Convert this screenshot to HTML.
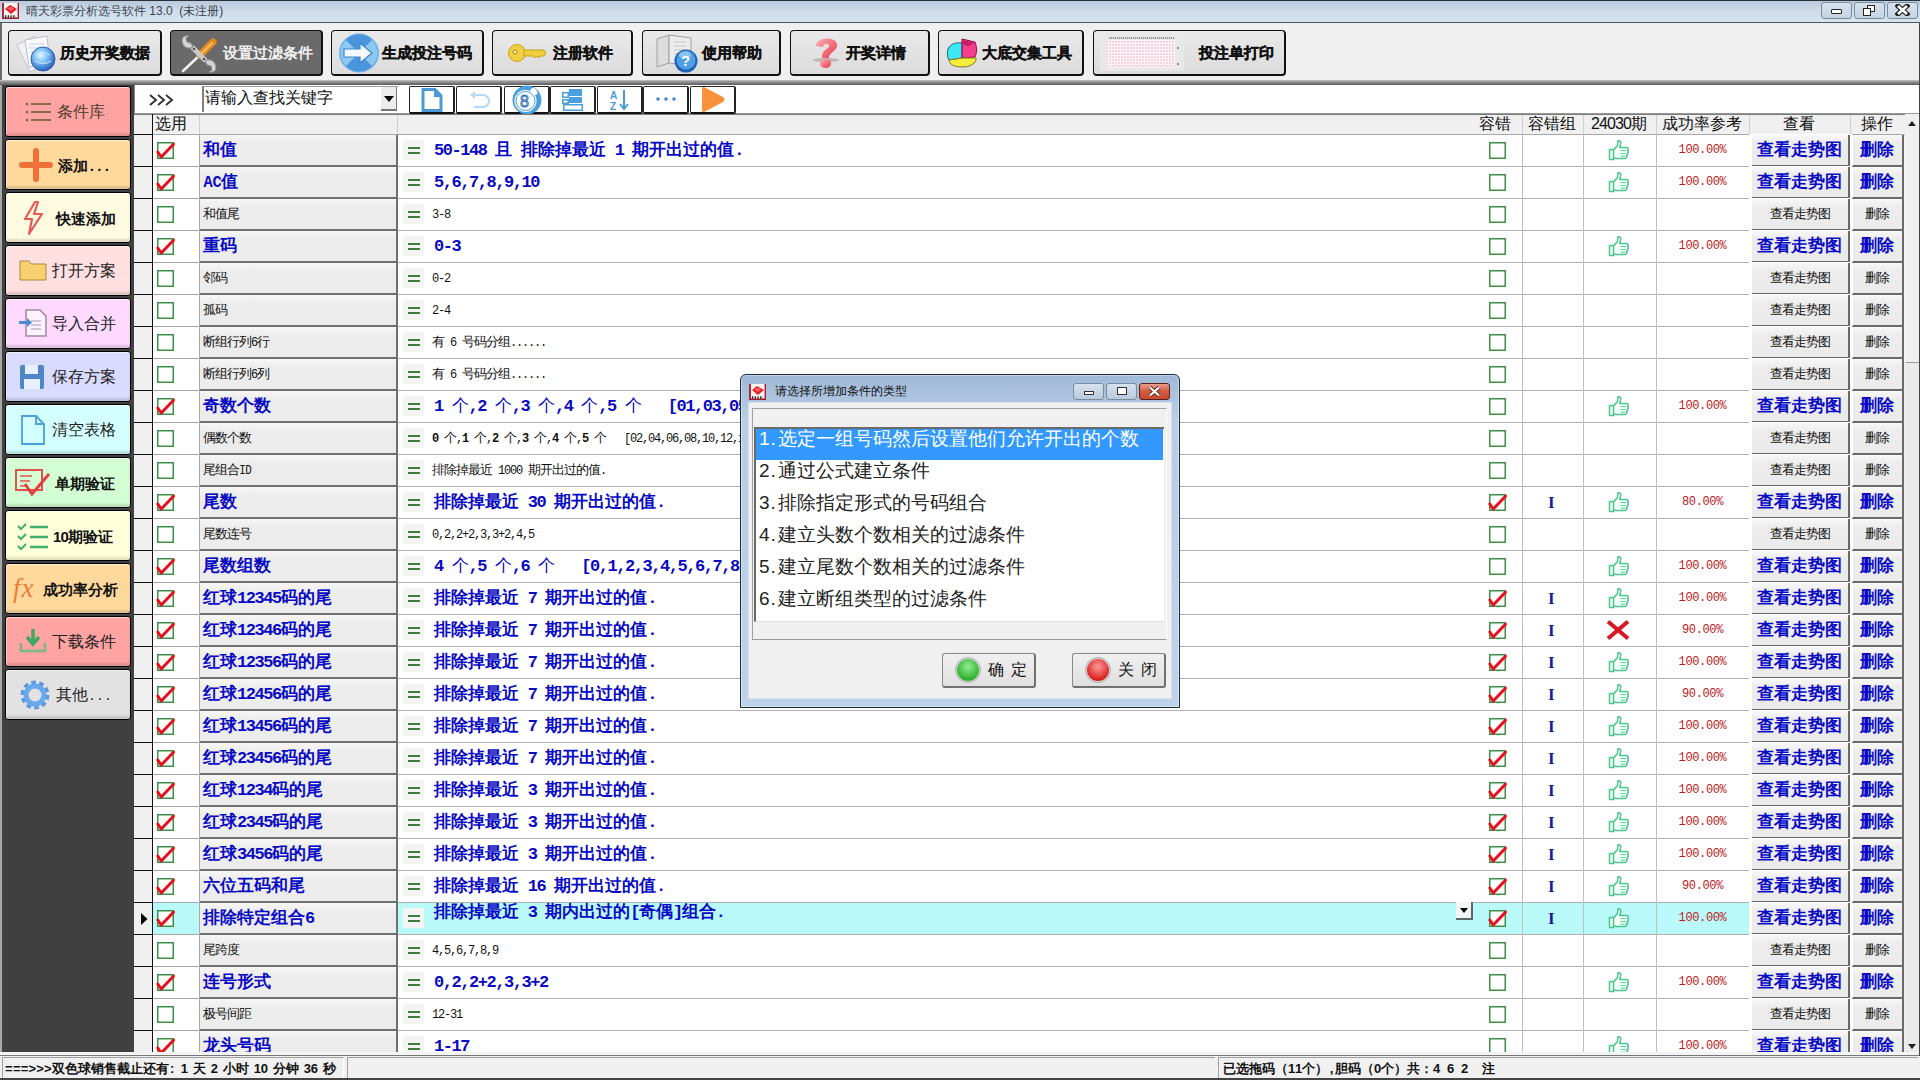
<!DOCTYPE html><html><head><meta charset="utf-8"><style>
*{box-sizing:border-box}
html,body{margin:0;padding:0}
body{width:1920px;height:1080px;overflow:hidden;position:relative;background:#f0f0f0;font-family:"Liberation Sans",sans-serif;color:#000}
.ab{position:absolute}
.t{position:absolute;white-space:nowrap;line-height:1}
.bb{font-weight:bold;color:#0a0ac4;font-size:17px}
.sm{font-size:13px;letter-spacing:-1px;color:#111;font-weight:500}
.sm i{font-size:12px;letter-spacing:0}
.t i{display:inline-block;font-style:normal;text-align:center}
.bb i{width:8.75px}
.sm i{width:6px}
.hd i{width:8px}
.dl i{width:9.5px}
.st i{width:7px}
.st i.s{width:5px}
.st i.w{width:7.8px}
.st i.s7{width:7px}
.rt i{width:6.85px;font-family:'Liberation Mono',monospace}
.bb b{font-weight:bold}
.t i.u{transform:scaleX(.9)}
.bb i,.sm i{font-family:'Liberation Mono',monospace}
.sb i{width:8px}
.sbb i{width:7.5px}

</style></head><body>
<div class="ab" style="left:0;top:0;width:1920px;height:23px;background:linear-gradient(#b9c9db,#cddbea 45%,#d6e3f0);border-top:1px solid #26313c;border-bottom:1px solid #4b5560"></div>
<svg class="ab" style="left:2px;top:2px" width="17" height="17" viewBox="0 0 17 17"><rect x="1" y="1" width="15" height="15" fill="#fff4f4"/><path d="M1 1 V16.5 H16.5 V1" fill="none" stroke="#a8182a" stroke-width="1.8"/><path d="M3 7 L8 3 L15 7 L9 12 Z" fill="#e41e24"/><path d="M5 6.5 L9 4.5 L12 6.5 L9 9 Z" fill="#ff6060"/><path d="M3 14.5 h11" stroke="#222" stroke-width="2.4" stroke-dasharray="1.3 1.4"/></svg>
<div class="t" style="left:26px;top:5px;font-size:12px;color:#3a4450">晴天彩票分析选号软件 13.0&nbsp; (未注册)</div>
<div class="ab" style="left:1821px;top:2px;width:31px;height:17px;border:1px solid #7d8c9d;border-radius:3px;background:linear-gradient(#d6e2ee,#c4d3e3)"></div>
<div class="ab" style="left:1854px;top:2px;width:31px;height:17px;border:1px solid #7d8c9d;border-radius:3px;background:linear-gradient(#d6e2ee,#c4d3e3)"></div>
<div class="ab" style="left:1887px;top:2px;width:31px;height:17px;border:1px solid #7d8c9d;border-radius:3px;background:linear-gradient(#d6e2ee,#c4d3e3)"></div>
<div class="ab" style="left:1831px;top:9px;width:11px;height:5px;background:#fff;border:1px solid #222;border-radius:1px"></div>
<div class="ab" style="left:1867px;top:5px;width:8px;height:7px;background:#fff;border:1px solid #222"></div><div class="ab" style="left:1863px;top:8px;width:8px;height:8px;background:#fff;border:1.5px solid #222"></div>
<svg class="ab" style="left:1895px;top:4px" width="15" height="12" viewBox="0 0 15 12"><path d="M3 2 L12 10 M12 2 L3 10" stroke="#222" stroke-width="5" stroke-linecap="square"/><path d="M3 2 L12 10 M12 2 L3 10" stroke="#fff" stroke-width="2.6"/></svg>
<div class="ab" style="left:0;top:23px;width:1920px;height:58px;background:#f0f0f0;border-left:2px solid #6e6e6e;border-right:1px solid #444"></div>
<div class="ab" style="left:8px;top:30px;width:154px;height:46px;background:linear-gradient(#e9e9e9,#dcdcdc);border:1px solid #111;border-right-width:2px;border-bottom-width:2px;border-radius:4px"></div>
<div class="t" style="left:60px;top:45px;font-size:15px;font-weight:bold;color:#111;-webkit-text-stroke:.35px #111">历史开奖数据</div>
<div class="ab" style="left:170px;top:30px;width:153px;height:46px;background:#6a6a6a;border:1px solid #111;border-right-width:2px;border-bottom-width:2px;border-radius:4px"></div>
<div class="t" style="left:223px;top:45px;font-size:15px;font-weight:bold;color:#f2f2f2;-webkit-text-stroke:0 #f2f2f2">设置过滤条件</div>
<div class="ab" style="left:331px;top:30px;width:153px;height:46px;background:linear-gradient(#e9e9e9,#dcdcdc);border:1px solid #111;border-right-width:2px;border-bottom-width:2px;border-radius:4px"></div>
<div class="t" style="left:382px;top:45px;font-size:15px;font-weight:bold;color:#111;-webkit-text-stroke:.35px #111">生成投注号码</div>
<div class="ab" style="left:492px;top:30px;width:141px;height:46px;background:linear-gradient(#e9e9e9,#dcdcdc);border:1px solid #111;border-right-width:2px;border-bottom-width:2px;border-radius:4px"></div>
<div class="t" style="left:553px;top:45px;font-size:15px;font-weight:bold;color:#111;-webkit-text-stroke:.35px #111">注册软件</div>
<div class="ab" style="left:642px;top:30px;width:139px;height:46px;background:linear-gradient(#e9e9e9,#dcdcdc);border:1px solid #111;border-right-width:2px;border-bottom-width:2px;border-radius:4px"></div>
<div class="t" style="left:702px;top:45px;font-size:15px;font-weight:bold;color:#111;-webkit-text-stroke:.35px #111">使用帮助</div>
<div class="ab" style="left:790px;top:30px;width:140px;height:46px;background:linear-gradient(#e9e9e9,#dcdcdc);border:1px solid #111;border-right-width:2px;border-bottom-width:2px;border-radius:4px"></div>
<div class="t" style="left:846px;top:45px;font-size:15px;font-weight:bold;color:#111;-webkit-text-stroke:.35px #111">开奖详情</div>
<div class="ab" style="left:938px;top:30px;width:146px;height:46px;background:linear-gradient(#e9e9e9,#dcdcdc);border:1px solid #111;border-right-width:2px;border-bottom-width:2px;border-radius:4px"></div>
<div class="t" style="left:982px;top:45px;font-size:15px;font-weight:bold;color:#111;-webkit-text-stroke:.35px #111">大底交集工具</div>
<div class="ab" style="left:1093px;top:30px;width:193px;height:46px;background:linear-gradient(#e9e9e9,#dcdcdc);border:1px solid #111;border-right-width:2px;border-bottom-width:2px;border-radius:4px"></div>
<div class="t" style="left:1199px;top:45px;font-size:15px;font-weight:bold;color:#111;-webkit-text-stroke:.35px #111">投注单打印</div>
<svg class="ab" style="left:15px;top:33px" width="44" height="40" viewBox="0 0 44 40"><defs><radialGradient id="gl" cx="40%" cy="35%" r="65%"><stop offset="0" stop-color="#e8f6ff"/><stop offset=".45" stop-color="#7cc0f4"/><stop offset="1" stop-color="#2a62c0"/></radialGradient></defs><path d="M2 12 L20 3 L33 31 L15 39 Z" fill="#f0f0f6" stroke="#c4c4d0"/><path d="M10 7 L32 3 L35 31 L14 34 Z" fill="#fafafe" stroke="#bcbcc8"/><path d="M14 11 h15 M14 15 h15 M15 19 h14" stroke="#c8cce4"/><circle cx="28" cy="26" r="12" fill="url(#gl)" stroke="#2f5fa8" stroke-width="1"/><path d="M21 22 q7 -5 14 0 M20 28 q8 5 16 0" stroke="#d8f0ff" stroke-width="1.2" fill="none" opacity=".8"/></svg>
<svg class="ab" style="left:179px;top:34px" width="42" height="40" viewBox="0 0 42 40"><path d="M4 37 L22 20" stroke="#f0f0f0" stroke-width="2.6" stroke-linecap="round"/><path d="M21 21 L34 8" stroke="#e88a18" stroke-width="7" stroke-linecap="round"/><path d="M23 19 L33 9" stroke="#f8c070" stroke-width="2" stroke-linecap="round"/><path d="M13 13 L27 27" stroke="#c8c8c8" stroke-width="5"/><path d="M3 6 C3 13 9 16 14 13 L12 9 L8 8 L7 4 L10 2 C6 1 3 3 3 6 Z" fill="#d4d4d4" stroke="#888"/><path d="M37 34 C37 27 31 24 26 27 L28 31 L32 32 L33 36 L30 38 C34 39 37 37 37 34 Z" fill="#d4d4d4" stroke="#888"/><circle cx="15" cy="15" r="1.3" fill="#555"/><circle cx="25" cy="25" r="1.3" fill="#555"/></svg>
<svg class="ab" style="left:339px;top:33px" width="40" height="40" viewBox="0 0 40 40"><circle cx="20" cy="20" r="19" fill="#4a94dc"/><path d="M20 20 L6 6 A19 19 0 0 0 6 34 Z M20 20 L34 6 A19 19 0 0 1 34 34 Z" fill="#8cc8f0"/><circle cx="20" cy="20" r="19" fill="none" stroke="#6aaee8" stroke-width="1.2"/><path d="M5 16 h16 v-6 l12 10 l-12 10 v-6 h-16 z" fill="#f4faff" stroke="#3a86cc" stroke-width="1.2"/></svg>
<svg class="ab" style="left:508px;top:42px" width="40" height="22" viewBox="0 0 40 22"><circle cx="9" cy="11" r="8.5" fill="#f0d040" stroke="#c8a020"/><circle cx="7" cy="10" r="2" fill="#fff8c0" stroke="#b08a10"/><path d="M16 8 h20 l2 3 l-2 3 h-4 l-1 2 l-2 -2 l-2 2 l-2 -2 h-9 z" fill="#f0d040" stroke="#c8a020"/></svg>
<svg class="ab" style="left:655px;top:33px" width="48" height="42" viewBox="0 0 48 42"><path d="M2 6 L14 2 L14 30 L2 34 Z" fill="#dcdcdc" stroke="#a0a0a0"/><path d="M14 2 L36 5 L36 33 L14 30 Z" fill="#ececec" stroke="#a0a0a0"/><path d="M19 9 h12 M19 13 h12 M19 17 h12 M19 21 h8" stroke="#c4c4c4"/><circle cx="31" cy="28" r="11.5" fill="#1f62b4"/><circle cx="31" cy="27" r="9.5" fill="#4f9ee6"/><ellipse cx="30" cy="22" rx="6" ry="3.5" fill="#a8d4f8" opacity=".7"/><text x="26" y="33" font-size="15" font-family="Liberation Sans" fill="#fff" font-weight="bold">?</text></svg>
<svg class="ab" style="left:813px;top:36px" width="32" height="32" viewBox="0 0 32 32"><defs><linearGradient id="qm" x1="0" y1="0" x2="1" y2="1"><stop offset="0" stop-color="#ffb0b8"/><stop offset="1" stop-color="#e8384c"/></linearGradient></defs><ellipse cx="13" cy="24" rx="13" ry="2" fill="#a8a8a8" opacity=".7"/><path d="M3 10 C2 1 25 -1 24 10 C23 16 16 16 16 22 h-7 C8 14 16 13 16 10 C16 7 11 7 10 11 Z" fill="url(#qm)"/><ellipse cx="12.5" cy="27.5" rx="5.5" ry="4.5" fill="url(#qm)"/></svg>
<svg class="ab" style="left:946px;top:37px" width="34" height="32" viewBox="0 0 34 32"><path d="M2 12 C4 7 10 5 16 6 L16 21 L3 23 C1 19 1 15 2 12 Z" fill="#3ce8f4" stroke="#1c6a7a"/><path d="M16 2 L29 5 C31 10 31 16 29 20 L16 21 Z" fill="#f2408e" stroke="#8a1048"/><path d="M16 3 L29 6 L22 9 L16 7 Z" fill="#c81a68"/><path d="M3 23 L16 21 L30 21 C31 26 24 30 16 30 C8 30 3 27 3 23 Z" fill="#f6ee3c" stroke="#807a20"/></svg>
<svg class="ab" style="left:1100px;top:35px" width="84" height="36" viewBox="0 0 84 36"><defs><pattern id="tk" width="3" height="3" patternUnits="userSpaceOnUse"><rect width="3" height="3" fill="#fdf4f7"/><rect width="2" height="2" fill="#f6d2de"/></pattern></defs><rect x="0" y="0" width="84" height="36" fill="#e8e8e8"/><rect x="7" y="5" width="68" height="28" fill="url(#tk)"/><path d="M9 3 h66" stroke="#7a7a7a" stroke-width="1.4" stroke-dasharray="1.2 0.8"/><circle cx="78" cy="13" r="0.9" fill="#555"/><circle cx="78" cy="29" r="0.9" fill="#555"/></svg>
<div class="ab" style="left:0;top:80px;width:1920px;height:5px;background:linear-gradient(#d0d0d0 0,#a0a0a0 20%,#8a8a8a 50%,#6a6a6a 80%,#5a5a5a)"></div>
<div class="ab" style="left:0;top:85px;width:134px;height:967px;background:#404040;border-left:2px solid #a8a8a8"></div>
<div class="ab" style="left:5px;top:86px;width:126px;height:51px;background:#ffa3a3;border:1px solid #000;border-radius:3px;box-shadow:inset 1px 1px 0 rgba(255,255,255,.55),inset 0 -3px 2px rgba(0,0,0,.12)"></div>
<div class="t sb" style="left:57px;top:104px;font-size:16px;color:#4d3d2d">条件库</div>
<div class="ab" style="left:5px;top:139px;width:126px;height:51px;background:#ffd99c;border:1px solid #000;border-radius:3px;box-shadow:inset 1px 1px 0 rgba(255,255,255,.55),inset 0 -3px 2px rgba(0,0,0,.12)"></div>
<div class="t sbb" style="left:58px;top:158px;font-size:15px;font-weight:bold;color:#111">添加<i>.</i><i>.</i><i>.</i></div>
<div class="ab" style="left:5px;top:192px;width:126px;height:51px;background:#fffbe0;border:1px solid #000;border-radius:3px;box-shadow:inset 1px 1px 0 rgba(255,255,255,.55),inset 0 -3px 2px rgba(0,0,0,.12)"></div>
<div class="t sbb" style="left:56px;top:211px;font-size:15px;font-weight:bold;color:#111">快速添加</div>
<div class="ab" style="left:5px;top:245px;width:126px;height:51px;background:#ffdfe0;border:1px solid #000;border-radius:3px;box-shadow:inset 1px 1px 0 rgba(255,255,255,.55),inset 0 -3px 2px rgba(0,0,0,.12)"></div>
<div class="t sb" style="left:52px;top:263px;font-size:16px;color:#222">打开方案</div>
<div class="ab" style="left:5px;top:298px;width:126px;height:51px;background:#ffd9ff;border:1px solid #000;border-radius:3px;box-shadow:inset 1px 1px 0 rgba(255,255,255,.55),inset 0 -3px 2px rgba(0,0,0,.12)"></div>
<div class="t sb" style="left:52px;top:316px;font-size:16px;color:#222">导入合并</div>
<div class="ab" style="left:5px;top:351px;width:126px;height:51px;background:#d9dbff;border:1px solid #000;border-radius:3px;box-shadow:inset 1px 1px 0 rgba(255,255,255,.55),inset 0 -3px 2px rgba(0,0,0,.12)"></div>
<div class="t sb" style="left:52px;top:369px;font-size:16px;color:#222">保存方案</div>
<div class="ab" style="left:5px;top:404px;width:126px;height:51px;background:#d4ffff;border:1px solid #000;border-radius:3px;box-shadow:inset 1px 1px 0 rgba(255,255,255,.55),inset 0 -3px 2px rgba(0,0,0,.12)"></div>
<div class="t sb" style="left:52px;top:422px;font-size:16px;color:#222">清空表格</div>
<div class="ab" style="left:5px;top:457px;width:126px;height:51px;background:#d4ffd4;border:1px solid #000;border-radius:3px;box-shadow:inset 1px 1px 0 rgba(255,255,255,.55),inset 0 -3px 2px rgba(0,0,0,.12)"></div>
<div class="t sbb" style="left:55px;top:476px;font-size:15px;font-weight:bold;color:#111">单期验证</div>
<div class="ab" style="left:5px;top:510px;width:126px;height:51px;background:#ffffd9;border:1px solid #000;border-radius:3px;box-shadow:inset 1px 1px 0 rgba(255,255,255,.55),inset 0 -3px 2px rgba(0,0,0,.12)"></div>
<div class="t sbb" style="left:53px;top:529px;font-size:15px;font-weight:bold;color:#111"><i>1</i><i>0</i>期验证</div>
<div class="ab" style="left:5px;top:563px;width:126px;height:51px;background:#ffd99c;border:1px solid #000;border-radius:3px;box-shadow:inset 1px 1px 0 rgba(255,255,255,.55),inset 0 -3px 2px rgba(0,0,0,.12)"></div>
<div class="t sbb" style="left:43px;top:582px;font-size:15px;font-weight:bold;color:#111">成功率分析</div>
<div class="ab" style="left:5px;top:616px;width:126px;height:51px;background:#ffa3a3;border:1px solid #000;border-radius:3px;box-shadow:inset 1px 1px 0 rgba(255,255,255,.55),inset 0 -3px 2px rgba(0,0,0,.12)"></div>
<div class="t sb" style="left:52px;top:634px;font-size:16px;color:#222">下载条件</div>
<div class="ab" style="left:5px;top:669px;width:126px;height:51px;background:#e2e2e2;border:1px solid #000;border-radius:3px;box-shadow:inset 1px 1px 0 rgba(255,255,255,.55),inset 0 -3px 2px rgba(0,0,0,.12)"></div>
<div class="t sb" style="left:56px;top:687px;font-size:16px;color:#222">其他<i>.</i><i>.</i><i>.</i></div>
<svg class="ab" style="left:25px;top:101px" width="28" height="22" viewBox="0 0 28 22"><g fill="#8a6a5a"><circle cx="2" cy="3" r="1.5"/><circle cx="2" cy="11" r="1.5"/><circle cx="2" cy="19" r="1.5"/></g><path d="M6 3 h20 M6 11 h20 M6 19 h20" stroke="#8a6a4a" stroke-width="2.2"/></svg>
<svg class="ab" style="left:19px;top:148px" width="34" height="34" viewBox="0 0 34 34"><path d="M17 3 V31 M3 17 H31" stroke="#f0703a" stroke-width="6" stroke-linecap="round"/></svg>
<svg class="ab" style="left:21px;top:200px" width="24" height="36" viewBox="0 0 24 36"><path d="M14 2 L4 19 H11 L8 34 L21 14 H13 L17 2 Z" fill="none" stroke="#e85a5a" stroke-width="2.2" stroke-linejoin="round"/></svg>
<svg class="ab" style="left:19px;top:259px" width="28" height="22" viewBox="0 0 28 22"><path d="M1 2 h9 l2 3 h15 v16 h-26 z" fill="#f8d070" stroke="#a88a40"/></svg>
<svg class="ab" style="left:17px;top:307px" width="32" height="32" viewBox="0 0 32 32"><path d="M9 3 h14 l6 6 v20 h-20 z" fill="#fff0ff" stroke="#9a8aa0" stroke-width="1.5"/><path d="M14 14 h10 M14 18 h10 M14 22 h10" stroke="#a09aaa"/><path d="M2 14 h8 v-3 l5 4.5 l-5 4.5 v-3 h-8 z" fill="#4a8ad0"/></svg>
<svg class="ab" style="left:19px;top:364px" width="26" height="26" viewBox="0 0 26 26"><rect x="1" y="1" width="24" height="24" rx="2" fill="#4f86c8"/><rect x="6" y="1" width="13" height="9" fill="#e8f0ff"/><rect x="5" y="15" width="16" height="10" fill="#e8f0ff"/></svg>
<svg class="ab" style="left:20px;top:414px" width="26" height="32" viewBox="0 0 26 32"><path d="M2 2 h14 l8 8 v20 h-22 z M16 2 v8 h8" fill="none" stroke="#4aa0d8" stroke-width="1.8"/></svg>
<svg class="ab" style="left:15px;top:468px" width="36" height="30" viewBox="0 0 36 30"><rect x="1" y="2" width="26" height="20" fill="none" stroke="#e05050" stroke-width="2"/><path d="M5 8 h12 M5 13 h10 M5 18 h8" stroke="#e05050" stroke-width="1.5"/><path d="M10 16 L17 26 L34 6" fill="none" stroke="#e04040" stroke-width="3"/></svg>
<svg class="ab" style="left:17px;top:522px" width="32" height="30" viewBox="0 0 32 30"><path d="M1 4 l3 3 l5 -5 M1 14 l3 3 l5 -5 M1 24 l3 3 l5 -5" fill="none" stroke="#40b070" stroke-width="2"/><path d="M13 5 h18 M13 15 h18 M13 25 h18" stroke="#40b070" stroke-width="2.4"/></svg>
<svg class="ab" style="left:12px;top:574px" width="32" height="30" viewBox="0 0 32 30"><text x="1" y="23" font-family="Liberation Serif" font-style="italic" font-size="27" fill="#f07a3a" letter-spacing="1">fx</text></svg>
<svg class="ab" style="left:19px;top:627px" width="28" height="28" viewBox="0 0 28 28"><path d="M14 2 v14 M8 10 l6 7 l6 -7" fill="none" stroke="#40a860" stroke-width="3.5"/><path d="M2 16 v8 h24 v-8" fill="none" stroke="#7ab888" stroke-width="2.5"/></svg>
<svg class="ab" style="left:19px;top:679px" width="32" height="32" viewBox="0 0 32 32"><circle cx="16" cy="16" r="11" fill="none" stroke="#5a98e0" stroke-width="7" stroke-dasharray="4 2.9"/><circle cx="16" cy="16" r="9" fill="none" stroke="#6aa8ee" stroke-width="5"/><circle cx="16" cy="16" r="4" fill="#e2e2e2"/></svg>
<div class="ab" style="left:134px;top:85px;width:1786px;height:29px;background:#fff;border-bottom:1px solid #9a9a9a"></div>
<div class="ab" style="left:134px;top:85px;width:1px;height:971px;background:#8a8a8a"></div>
<svg class="ab" style="left:148px;top:93px" width="28" height="14" viewBox="0 0 28 14"><path d="M2 2 L8 7 L2 12 M10 2 L16 7 L10 12 M18 2 L24 7 L18 12" fill="none" stroke="#333" stroke-width="1.9"/></svg>
<div class="ab" style="left:202px;top:86px;width:196px;height:26px;background:#fff;border-left:2px solid #808080;border-top:1px solid #a0a0a0"></div>
<div class="t" style="left:205px;top:90px;font-size:16px;color:#111">请输入查找关键字</div>
<div class="ab" style="left:381px;top:87px;width:16px;height:24px;background:#ececec;border-right:1px solid #777;border-bottom:2px solid #777"></div>
<svg class="ab" style="left:384px;top:96px" width="10" height="6" viewBox="0 0 10 6"><path d="M0 0 h10 l-5 6 z" fill="#000"/></svg>
<div class="ab" style="left:409px;top:86px;width:46px;height:28px;background:#fff;border:1px solid #222;border-bottom:2px solid #111;border-right:2px solid #222;border-radius:2px"></div>
<div class="ab" style="left:456px;top:86px;width:46px;height:28px;background:#fff;border:1px solid #222;border-bottom:2px solid #111;border-right:2px solid #222;border-radius:2px"></div>
<div class="ab" style="left:504px;top:86px;width:46px;height:28px;background:#fff;border:1px solid #222;border-bottom:2px solid #111;border-right:2px solid #222;border-radius:2px"></div>
<div class="ab" style="left:550px;top:86px;width:46px;height:28px;background:#fff;border:1px solid #222;border-bottom:2px solid #111;border-right:2px solid #222;border-radius:2px"></div>
<div class="ab" style="left:597px;top:86px;width:46px;height:28px;background:#fff;border:1px solid #222;border-bottom:2px solid #111;border-right:2px solid #222;border-radius:2px"></div>
<div class="ab" style="left:643px;top:86px;width:46px;height:28px;background:#fff;border:1px solid #222;border-bottom:2px solid #111;border-right:2px solid #222;border-radius:2px"></div>
<div class="ab" style="left:690px;top:86px;width:46px;height:28px;background:#fff;border:1px solid #222;border-bottom:2px solid #111;border-right:2px solid #222;border-radius:2px"></div>
<svg class="ab" style="left:421px;top:88px" width="22" height="24" viewBox="0 0 22 24"><path d="M2 1.5 h12 l6 6 v15 h-18 z" fill="#fff" stroke="#4a9ad8" stroke-width="3"/><path d="M13 1 v8 h8" fill="#4a9ad8"/></svg>
<svg class="ab" style="left:468px;top:89px" width="24" height="22" viewBox="0 0 24 22"><path d="M6 6 h9 a6 6 0 0 1 0 12 h-9" fill="none" stroke="#b8d8f0" stroke-width="2.2"/><path d="M2 6 l5 -4 v8 z" fill="#b8d8f0"/></svg>
<svg class="ab" style="left:511px;top:84px" width="32" height="32" viewBox="0 0 32 32"><circle cx="16" cy="16" r="14.5" fill="#4aa0dc"/><circle cx="14.5" cy="17" r="11" fill="#fff"/><circle cx="14.5" cy="17" r="9.5" fill="none" stroke="#4aa0dc" stroke-width="1"/><ellipse cx="23" cy="7.5" rx="2.8" ry="4" fill="#fff" transform="rotate(-40 23 7.5)"/><text x="9" y="23" font-size="16" font-family="Liberation Sans" fill="#fff" stroke="#3a7ab8" stroke-width="1">8</text></svg>
<svg class="ab" style="left:561px;top:88px" width="26" height="24" viewBox="0 0 26 24"><rect x="1.75" y="4.75" width="5.5" height="4.5" fill="none" stroke="#4aa0dc" stroke-width="1.5"/><rect x="8" y="1" width="13" height="7" fill="#4aa0dc"/><rect x="1.75" y="11.75" width="5.5" height="3.5" fill="none" stroke="#4aa0dc" stroke-width="1.5"/><rect x="8" y="9" width="13" height="6" fill="#4aa0dc"/><rect x="2.75" y="16.75" width="18.5" height="5.5" fill="none" stroke="#4aa0dc" stroke-width="1.5"/></svg>
<svg class="ab" style="left:609px;top:88px" width="22" height="24" viewBox="0 0 22 24"><text x="1" y="11" font-size="10" font-family="Liberation Sans" fill="#4a9ad8" font-weight="bold">A</text><text x="1" y="22" font-size="10" font-family="Liberation Sans" fill="#4a9ad8" font-weight="bold">Z</text><path d="M15 2 v19 M11 16 l4 5 l4 -5" fill="none" stroke="#4a9ad8" stroke-width="2"/></svg>
<svg class="ab" style="left:655px;top:96px" width="22" height="6" viewBox="0 0 22 6"><circle cx="3" cy="3" r="1.8" fill="#4a86c0"/><circle cx="11" cy="3" r="1.8" fill="#4a86c0"/><circle cx="19" cy="3" r="1.8" fill="#4a86c0"/></svg>
<svg class="ab" style="left:699px;top:86px" width="28" height="27" viewBox="0 0 28 27"><path d="M3 3 Q3 0 6 1.5 L24 11 Q27 13.5 24 16 L6 25.5 Q3 27 3 24 Z" fill="#f8913a"/></svg>
<div class="ab" style="left:134px;top:114px;width:1771px;height:21px;background:#f0f0f0;border-top:1px solid #7a7a7a;border-bottom:1px solid #a8a8a8"></div>
<div class="ab" style="left:152px;top:114px;width:1px;height:21px;background:#111"></div>
<div class="ab" style="left:134px;top:134px;width:18px;height:1px;background:#111"></div>
<div class="ab" style="left:199px;top:115px;width:1px;height:19px;background:#cfcfcf"></div>
<div class="ab" style="left:397px;top:115px;width:1px;height:19px;background:#cfcfcf"></div>
<div class="ab" style="left:1522px;top:115px;width:1px;height:19px;background:#cfcfcf"></div>
<div class="ab" style="left:1583px;top:115px;width:1px;height:19px;background:#cfcfcf"></div>
<div class="ab" style="left:1656px;top:115px;width:1px;height:19px;background:#cfcfcf"></div>
<div class="ab" style="left:1749px;top:115px;width:1px;height:19px;background:#cfcfcf"></div>
<div class="ab" style="left:1850px;top:115px;width:1px;height:19px;background:#cfcfcf"></div>
<div class="t hd" style="left:155px;top:116px;font-size:16px;color:#111">选用</div>
<div class="t hd" style="left:1479px;top:116px;font-size:16px;color:#111">容错</div>
<div class="t hd" style="left:1528px;top:116px;font-size:16px;color:#111">容错组</div>
<div class="t hd" style="left:1591px;top:116px;font-size:16px;color:#111"><i>2</i><i>4</i><i>0</i><i>3</i><i>0</i>期</div>
<div class="t hd" style="left:1662px;top:116px;font-size:16px;color:#111">成功率参考</div>
<div class="t hd" style="left:1783px;top:116px;font-size:16px;color:#111">查看</div>
<div class="t hd" style="left:1861px;top:116px;font-size:16px;color:#111">操作</div>
<div class="ab" style="left:134px;top:134px;width:1771px;height:918px;overflow:hidden">
<div class="ab" style="left:0;top:1px;width:18px;height:32px;background:#f0f0f0;border-bottom:1px solid #111"></div>
<div class="ab" style="left:18px;top:0px;width:1px;height:32px;background:#111"></div>
<div class="ab" style="left:19px;top:1px;width:46px;height:32px;background:#fff;border-bottom:1px solid #a8a8a8"></div>
<div class="ab" style="left:65px;top:0px;width:1px;height:32px;background:#a8a8a8"></div>
<div class="ab" style="left:23px;top:8px"><svg width="19" height="19" viewBox="0 0 19 19" style="overflow:visible"><rect x="0.75" y="0.75" width="15.5" height="15.5" fill="#fff" stroke="#3d8f45" stroke-width="1.5"/><path d="M0.8 10 L4.2 15 L16.5 2.2" fill="none" stroke="#e6101a" stroke-width="3" stroke-linecap="round" stroke-linejoin="round"/></svg></div>
<div class="ab" style="left:66px;top:1px;width:198px;height:32px;background:linear-gradient(#f6f6f6,#ececec 30%,#ececec);border-bottom:2px solid #6e6e6e;border-right:2px solid #707070"></div>
<div class="t bb" style="left:69px;top:7px">和值</div>
<div class="ab" style="left:264px;top:1px;width:1351px;height:32px;background:#fff;border-bottom:1px solid #b0b0b0"></div>

<div class="ab" style="left:1388px;top:0px;width:1px;height:32px;background:#c0c0c0"></div>
<div class="ab" style="left:1449px;top:0px;width:1px;height:32px;background:#c0c0c0"></div>
<div class="ab" style="left:1522px;top:0px;width:1px;height:32px;background:#c0c0c0"></div>
<div class="ab" style="left:269px;top:6px;width:21px;height:20px;background:#f3f5f3"></div>
<div class="ab" style="left:274px;top:13px;width:12px;height:2px;background:#3d7d3d"></div><div class="ab" style="left:274px;top:18px;width:12px;height:2px;background:#3d7d3d"></div>
<div class="t bb" style="left:300px;top:7px"><i>5</i><i>0</i><i>-</i><i>1</i><i>4</i><i>8</i><i>&nbsp;</i>且<i>&nbsp;</i>排除掉最近<i>&nbsp;</i><i>1</i><i>&nbsp;</i>期开出过的值<i>.</i></div>
<div class="ab" style="left:1355px;top:8px"><svg width="17" height="17" viewBox="0 0 17 17"><rect x="0.75" y="0.75" width="15.5" height="15.5" fill="#fff" stroke="#3d8f45" stroke-width="1.5"/></svg></div>
<div class="ab" style="left:1474px;top:5px"><svg width="22" height="22" viewBox="0 0 22 22"><path d="M1.5 10.5 h4 v10 h-4 z M5.5 11 L9.5 6.5 L10 1.8 C11.8 1.2 13.2 2.6 12.6 5.2 L11.8 8.6 H18.4 C20 8.6 20.6 10.2 19.8 11.2 C20.8 12 20.6 13.6 19.4 14 C20.2 14.8 19.8 16.4 18.6 16.6 C19.2 17.6 18.6 19.2 17.2 19.6 H8 L5.5 18.5" fill="#f4fff8" stroke="#48c48e" stroke-width="1.5" stroke-linejoin="round"/><path d="M12.5 11.6 h5.6 M12.5 14.6 h5.6 M12.5 17.2 h4.8" stroke="#58c898" stroke-width="1"/></svg></div>
<div class="t rt" style="left:1522px;top:9px;width:93px;text-align:center;font-size:12px;color:#c01820"><i>1</i><i>0</i><i>0</i><i>.</i><i>0</i><i>0</i><i>%</i></div>
<div class="ab" style="left:1615px;top:0px;width:101px;height:32px;background:#fff"></div>
<div class="ab" style="left:1617px;top:1px;width:99px;height:32px;background:linear-gradient(#f8f8f8,#ededed 25%,#eaeaea);border-right:2px solid #6a6a6a;border-bottom:2px solid #6a6a6a;border-left:1px solid #fff"></div>
<div class="ab" style="left:1716px;top:0px;width:2px;height:32px;background:#fff"></div>
<div class="ab" style="left:1718px;top:1px;width:52px;height:32px;background:linear-gradient(#f8f8f8,#ededed 25%,#eaeaea);border-right:2px solid #6a6a6a;border-bottom:2px solid #6a6a6a;border-left:1px solid #fff"></div>
<div class="t bb" style="left:1617px;top:7px;width:97px;text-align:center">查看走势图</div>
<div class="t bb" style="left:1718px;top:7px;width:50px;text-align:center">删除</div>
<div class="ab" style="left:0;top:33px;width:18px;height:32px;background:#f0f0f0;border-bottom:1px solid #111"></div>
<div class="ab" style="left:18px;top:32px;width:1px;height:32px;background:#111"></div>
<div class="ab" style="left:19px;top:33px;width:46px;height:32px;background:#fff;border-bottom:1px solid #a8a8a8"></div>
<div class="ab" style="left:65px;top:32px;width:1px;height:32px;background:#a8a8a8"></div>
<div class="ab" style="left:23px;top:40px"><svg width="19" height="19" viewBox="0 0 19 19" style="overflow:visible"><rect x="0.75" y="0.75" width="15.5" height="15.5" fill="#fff" stroke="#3d8f45" stroke-width="1.5"/><path d="M0.8 10 L4.2 15 L16.5 2.2" fill="none" stroke="#e6101a" stroke-width="3" stroke-linecap="round" stroke-linejoin="round"/></svg></div>
<div class="ab" style="left:66px;top:33px;width:198px;height:32px;background:linear-gradient(#f6f6f6,#ececec 30%,#ececec);border-bottom:2px solid #6e6e6e;border-right:2px solid #707070"></div>
<div class="t bb" style="left:69px;top:39px"><i class=u>A</i><i class=u>C</i>值</div>
<div class="ab" style="left:264px;top:33px;width:1351px;height:32px;background:#fff;border-bottom:1px solid #b0b0b0"></div>

<div class="ab" style="left:1388px;top:32px;width:1px;height:32px;background:#c0c0c0"></div>
<div class="ab" style="left:1449px;top:32px;width:1px;height:32px;background:#c0c0c0"></div>
<div class="ab" style="left:1522px;top:32px;width:1px;height:32px;background:#c0c0c0"></div>
<div class="ab" style="left:269px;top:38px;width:21px;height:20px;background:#f3f5f3"></div>
<div class="ab" style="left:274px;top:45px;width:12px;height:2px;background:#3d7d3d"></div><div class="ab" style="left:274px;top:50px;width:12px;height:2px;background:#3d7d3d"></div>
<div class="t bb" style="left:300px;top:39px"><i>5</i><i>,</i><i>6</i><i>,</i><i>7</i><i>,</i><i>8</i><i>,</i><i>9</i><i>,</i><i>1</i><i>0</i></div>
<div class="ab" style="left:1355px;top:40px"><svg width="17" height="17" viewBox="0 0 17 17"><rect x="0.75" y="0.75" width="15.5" height="15.5" fill="#fff" stroke="#3d8f45" stroke-width="1.5"/></svg></div>
<div class="ab" style="left:1474px;top:37px"><svg width="22" height="22" viewBox="0 0 22 22"><path d="M1.5 10.5 h4 v10 h-4 z M5.5 11 L9.5 6.5 L10 1.8 C11.8 1.2 13.2 2.6 12.6 5.2 L11.8 8.6 H18.4 C20 8.6 20.6 10.2 19.8 11.2 C20.8 12 20.6 13.6 19.4 14 C20.2 14.8 19.8 16.4 18.6 16.6 C19.2 17.6 18.6 19.2 17.2 19.6 H8 L5.5 18.5" fill="#f4fff8" stroke="#48c48e" stroke-width="1.5" stroke-linejoin="round"/><path d="M12.5 11.6 h5.6 M12.5 14.6 h5.6 M12.5 17.2 h4.8" stroke="#58c898" stroke-width="1"/></svg></div>
<div class="t rt" style="left:1522px;top:41px;width:93px;text-align:center;font-size:12px;color:#c01820"><i>1</i><i>0</i><i>0</i><i>.</i><i>0</i><i>0</i><i>%</i></div>
<div class="ab" style="left:1615px;top:32px;width:101px;height:32px;background:#fff"></div>
<div class="ab" style="left:1617px;top:33px;width:99px;height:32px;background:linear-gradient(#f8f8f8,#ededed 25%,#eaeaea);border-right:2px solid #6a6a6a;border-bottom:2px solid #6a6a6a;border-left:1px solid #fff"></div>
<div class="ab" style="left:1716px;top:32px;width:2px;height:32px;background:#fff"></div>
<div class="ab" style="left:1718px;top:33px;width:52px;height:32px;background:linear-gradient(#f8f8f8,#ededed 25%,#eaeaea);border-right:2px solid #6a6a6a;border-bottom:2px solid #6a6a6a;border-left:1px solid #fff"></div>
<div class="t bb" style="left:1617px;top:39px;width:97px;text-align:center">查看走势图</div>
<div class="t bb" style="left:1718px;top:39px;width:50px;text-align:center">删除</div>
<div class="ab" style="left:0;top:65px;width:18px;height:32px;background:#f0f0f0;border-bottom:1px solid #111"></div>
<div class="ab" style="left:18px;top:64px;width:1px;height:32px;background:#111"></div>
<div class="ab" style="left:19px;top:65px;width:46px;height:32px;background:#fff;border-bottom:1px solid #a8a8a8"></div>
<div class="ab" style="left:65px;top:64px;width:1px;height:32px;background:#a8a8a8"></div>
<div class="ab" style="left:23px;top:72px"><svg width="17" height="17" viewBox="0 0 17 17"><rect x="0.75" y="0.75" width="15.5" height="15.5" fill="#fff" stroke="#3d8f45" stroke-width="1.5"/></svg></div>
<div class="ab" style="left:66px;top:65px;width:198px;height:32px;background:linear-gradient(#f6f6f6,#ececec 30%,#ececec);border-bottom:2px solid #6e6e6e;border-right:2px solid #707070"></div>
<div class="t sm" style="left:69px;top:73px">和值尾</div>
<div class="ab" style="left:264px;top:65px;width:1351px;height:32px;background:#fff;border-bottom:1px solid #b0b0b0"></div>

<div class="ab" style="left:1388px;top:64px;width:1px;height:32px;background:#c0c0c0"></div>
<div class="ab" style="left:1449px;top:64px;width:1px;height:32px;background:#c0c0c0"></div>
<div class="ab" style="left:1522px;top:64px;width:1px;height:32px;background:#c0c0c0"></div>
<div class="ab" style="left:269px;top:70px;width:21px;height:20px;background:#f3f5f3"></div>
<div class="ab" style="left:274px;top:77px;width:12px;height:2px;background:#3d7d3d"></div><div class="ab" style="left:274px;top:82px;width:12px;height:2px;background:#3d7d3d"></div>
<div class="t sm" style="left:298px;top:73px"><i>3</i><i>-</i><i>8</i></div>
<div class="ab" style="left:1355px;top:72px"><svg width="17" height="17" viewBox="0 0 17 17"><rect x="0.75" y="0.75" width="15.5" height="15.5" fill="#fff" stroke="#3d8f45" stroke-width="1.5"/></svg></div>
<div class="ab" style="left:1615px;top:64px;width:101px;height:32px;background:#fff"></div>
<div class="ab" style="left:1617px;top:65px;width:99px;height:32px;background:linear-gradient(#f8f8f8,#ededed 25%,#eaeaea);border-right:2px solid #6a6a6a;border-bottom:2px solid #6a6a6a;border-left:1px solid #fff"></div>
<div class="ab" style="left:1716px;top:64px;width:2px;height:32px;background:#fff"></div>
<div class="ab" style="left:1718px;top:65px;width:52px;height:32px;background:linear-gradient(#f8f8f8,#ededed 25%,#eaeaea);border-right:2px solid #6a6a6a;border-bottom:2px solid #6a6a6a;border-left:1px solid #fff"></div>
<div class="t sm" style="left:1617px;top:73px;width:97px;text-align:center">查看走势图</div>
<div class="t sm" style="left:1718px;top:73px;width:50px;text-align:center">删除</div>
<div class="ab" style="left:0;top:97px;width:18px;height:32px;background:#f0f0f0;border-bottom:1px solid #111"></div>
<div class="ab" style="left:18px;top:96px;width:1px;height:32px;background:#111"></div>
<div class="ab" style="left:19px;top:97px;width:46px;height:32px;background:#fff;border-bottom:1px solid #a8a8a8"></div>
<div class="ab" style="left:65px;top:96px;width:1px;height:32px;background:#a8a8a8"></div>
<div class="ab" style="left:23px;top:104px"><svg width="19" height="19" viewBox="0 0 19 19" style="overflow:visible"><rect x="0.75" y="0.75" width="15.5" height="15.5" fill="#fff" stroke="#3d8f45" stroke-width="1.5"/><path d="M0.8 10 L4.2 15 L16.5 2.2" fill="none" stroke="#e6101a" stroke-width="3" stroke-linecap="round" stroke-linejoin="round"/></svg></div>
<div class="ab" style="left:66px;top:97px;width:198px;height:32px;background:linear-gradient(#f6f6f6,#ececec 30%,#ececec);border-bottom:2px solid #6e6e6e;border-right:2px solid #707070"></div>
<div class="t bb" style="left:69px;top:103px">重码</div>
<div class="ab" style="left:264px;top:97px;width:1351px;height:32px;background:#fff;border-bottom:1px solid #b0b0b0"></div>

<div class="ab" style="left:1388px;top:96px;width:1px;height:32px;background:#c0c0c0"></div>
<div class="ab" style="left:1449px;top:96px;width:1px;height:32px;background:#c0c0c0"></div>
<div class="ab" style="left:1522px;top:96px;width:1px;height:32px;background:#c0c0c0"></div>
<div class="ab" style="left:269px;top:102px;width:21px;height:20px;background:#f3f5f3"></div>
<div class="ab" style="left:274px;top:109px;width:12px;height:2px;background:#3d7d3d"></div><div class="ab" style="left:274px;top:114px;width:12px;height:2px;background:#3d7d3d"></div>
<div class="t bb" style="left:300px;top:103px"><i>0</i><i>-</i><i>3</i></div>
<div class="ab" style="left:1355px;top:104px"><svg width="17" height="17" viewBox="0 0 17 17"><rect x="0.75" y="0.75" width="15.5" height="15.5" fill="#fff" stroke="#3d8f45" stroke-width="1.5"/></svg></div>
<div class="ab" style="left:1474px;top:101px"><svg width="22" height="22" viewBox="0 0 22 22"><path d="M1.5 10.5 h4 v10 h-4 z M5.5 11 L9.5 6.5 L10 1.8 C11.8 1.2 13.2 2.6 12.6 5.2 L11.8 8.6 H18.4 C20 8.6 20.6 10.2 19.8 11.2 C20.8 12 20.6 13.6 19.4 14 C20.2 14.8 19.8 16.4 18.6 16.6 C19.2 17.6 18.6 19.2 17.2 19.6 H8 L5.5 18.5" fill="#f4fff8" stroke="#48c48e" stroke-width="1.5" stroke-linejoin="round"/><path d="M12.5 11.6 h5.6 M12.5 14.6 h5.6 M12.5 17.2 h4.8" stroke="#58c898" stroke-width="1"/></svg></div>
<div class="t rt" style="left:1522px;top:105px;width:93px;text-align:center;font-size:12px;color:#c01820"><i>1</i><i>0</i><i>0</i><i>.</i><i>0</i><i>0</i><i>%</i></div>
<div class="ab" style="left:1615px;top:96px;width:101px;height:32px;background:#fff"></div>
<div class="ab" style="left:1617px;top:97px;width:99px;height:32px;background:linear-gradient(#f8f8f8,#ededed 25%,#eaeaea);border-right:2px solid #6a6a6a;border-bottom:2px solid #6a6a6a;border-left:1px solid #fff"></div>
<div class="ab" style="left:1716px;top:96px;width:2px;height:32px;background:#fff"></div>
<div class="ab" style="left:1718px;top:97px;width:52px;height:32px;background:linear-gradient(#f8f8f8,#ededed 25%,#eaeaea);border-right:2px solid #6a6a6a;border-bottom:2px solid #6a6a6a;border-left:1px solid #fff"></div>
<div class="t bb" style="left:1617px;top:103px;width:97px;text-align:center">查看走势图</div>
<div class="t bb" style="left:1718px;top:103px;width:50px;text-align:center">删除</div>
<div class="ab" style="left:0;top:129px;width:18px;height:32px;background:#f0f0f0;border-bottom:1px solid #111"></div>
<div class="ab" style="left:18px;top:128px;width:1px;height:32px;background:#111"></div>
<div class="ab" style="left:19px;top:129px;width:46px;height:32px;background:#fff;border-bottom:1px solid #a8a8a8"></div>
<div class="ab" style="left:65px;top:128px;width:1px;height:32px;background:#a8a8a8"></div>
<div class="ab" style="left:23px;top:136px"><svg width="17" height="17" viewBox="0 0 17 17"><rect x="0.75" y="0.75" width="15.5" height="15.5" fill="#fff" stroke="#3d8f45" stroke-width="1.5"/></svg></div>
<div class="ab" style="left:66px;top:129px;width:198px;height:32px;background:linear-gradient(#f6f6f6,#ececec 30%,#ececec);border-bottom:2px solid #6e6e6e;border-right:2px solid #707070"></div>
<div class="t sm" style="left:69px;top:137px">邻码</div>
<div class="ab" style="left:264px;top:129px;width:1351px;height:32px;background:#fff;border-bottom:1px solid #b0b0b0"></div>

<div class="ab" style="left:1388px;top:128px;width:1px;height:32px;background:#c0c0c0"></div>
<div class="ab" style="left:1449px;top:128px;width:1px;height:32px;background:#c0c0c0"></div>
<div class="ab" style="left:1522px;top:128px;width:1px;height:32px;background:#c0c0c0"></div>
<div class="ab" style="left:269px;top:134px;width:21px;height:20px;background:#f3f5f3"></div>
<div class="ab" style="left:274px;top:141px;width:12px;height:2px;background:#3d7d3d"></div><div class="ab" style="left:274px;top:146px;width:12px;height:2px;background:#3d7d3d"></div>
<div class="t sm" style="left:298px;top:137px"><i>0</i><i>-</i><i>2</i></div>
<div class="ab" style="left:1355px;top:136px"><svg width="17" height="17" viewBox="0 0 17 17"><rect x="0.75" y="0.75" width="15.5" height="15.5" fill="#fff" stroke="#3d8f45" stroke-width="1.5"/></svg></div>
<div class="ab" style="left:1615px;top:128px;width:101px;height:32px;background:#fff"></div>
<div class="ab" style="left:1617px;top:129px;width:99px;height:32px;background:linear-gradient(#f8f8f8,#ededed 25%,#eaeaea);border-right:2px solid #6a6a6a;border-bottom:2px solid #6a6a6a;border-left:1px solid #fff"></div>
<div class="ab" style="left:1716px;top:128px;width:2px;height:32px;background:#fff"></div>
<div class="ab" style="left:1718px;top:129px;width:52px;height:32px;background:linear-gradient(#f8f8f8,#ededed 25%,#eaeaea);border-right:2px solid #6a6a6a;border-bottom:2px solid #6a6a6a;border-left:1px solid #fff"></div>
<div class="t sm" style="left:1617px;top:137px;width:97px;text-align:center">查看走势图</div>
<div class="t sm" style="left:1718px;top:137px;width:50px;text-align:center">删除</div>
<div class="ab" style="left:0;top:161px;width:18px;height:32px;background:#f0f0f0;border-bottom:1px solid #111"></div>
<div class="ab" style="left:18px;top:160px;width:1px;height:32px;background:#111"></div>
<div class="ab" style="left:19px;top:161px;width:46px;height:32px;background:#fff;border-bottom:1px solid #a8a8a8"></div>
<div class="ab" style="left:65px;top:160px;width:1px;height:32px;background:#a8a8a8"></div>
<div class="ab" style="left:23px;top:168px"><svg width="17" height="17" viewBox="0 0 17 17"><rect x="0.75" y="0.75" width="15.5" height="15.5" fill="#fff" stroke="#3d8f45" stroke-width="1.5"/></svg></div>
<div class="ab" style="left:66px;top:161px;width:198px;height:32px;background:linear-gradient(#f6f6f6,#ececec 30%,#ececec);border-bottom:2px solid #6e6e6e;border-right:2px solid #707070"></div>
<div class="t sm" style="left:69px;top:169px">孤码</div>
<div class="ab" style="left:264px;top:161px;width:1351px;height:32px;background:#fff;border-bottom:1px solid #b0b0b0"></div>

<div class="ab" style="left:1388px;top:160px;width:1px;height:32px;background:#c0c0c0"></div>
<div class="ab" style="left:1449px;top:160px;width:1px;height:32px;background:#c0c0c0"></div>
<div class="ab" style="left:1522px;top:160px;width:1px;height:32px;background:#c0c0c0"></div>
<div class="ab" style="left:269px;top:166px;width:21px;height:20px;background:#f3f5f3"></div>
<div class="ab" style="left:274px;top:173px;width:12px;height:2px;background:#3d7d3d"></div><div class="ab" style="left:274px;top:178px;width:12px;height:2px;background:#3d7d3d"></div>
<div class="t sm" style="left:298px;top:169px"><i>2</i><i>-</i><i>4</i></div>
<div class="ab" style="left:1355px;top:168px"><svg width="17" height="17" viewBox="0 0 17 17"><rect x="0.75" y="0.75" width="15.5" height="15.5" fill="#fff" stroke="#3d8f45" stroke-width="1.5"/></svg></div>
<div class="ab" style="left:1615px;top:160px;width:101px;height:32px;background:#fff"></div>
<div class="ab" style="left:1617px;top:161px;width:99px;height:32px;background:linear-gradient(#f8f8f8,#ededed 25%,#eaeaea);border-right:2px solid #6a6a6a;border-bottom:2px solid #6a6a6a;border-left:1px solid #fff"></div>
<div class="ab" style="left:1716px;top:160px;width:2px;height:32px;background:#fff"></div>
<div class="ab" style="left:1718px;top:161px;width:52px;height:32px;background:linear-gradient(#f8f8f8,#ededed 25%,#eaeaea);border-right:2px solid #6a6a6a;border-bottom:2px solid #6a6a6a;border-left:1px solid #fff"></div>
<div class="t sm" style="left:1617px;top:169px;width:97px;text-align:center">查看走势图</div>
<div class="t sm" style="left:1718px;top:169px;width:50px;text-align:center">删除</div>
<div class="ab" style="left:0;top:193px;width:18px;height:32px;background:#f0f0f0;border-bottom:1px solid #111"></div>
<div class="ab" style="left:18px;top:192px;width:1px;height:32px;background:#111"></div>
<div class="ab" style="left:19px;top:193px;width:46px;height:32px;background:#fff;border-bottom:1px solid #a8a8a8"></div>
<div class="ab" style="left:65px;top:192px;width:1px;height:32px;background:#a8a8a8"></div>
<div class="ab" style="left:23px;top:200px"><svg width="17" height="17" viewBox="0 0 17 17"><rect x="0.75" y="0.75" width="15.5" height="15.5" fill="#fff" stroke="#3d8f45" stroke-width="1.5"/></svg></div>
<div class="ab" style="left:66px;top:193px;width:198px;height:32px;background:linear-gradient(#f6f6f6,#ececec 30%,#ececec);border-bottom:2px solid #6e6e6e;border-right:2px solid #707070"></div>
<div class="t sm" style="left:69px;top:201px">断组行列<i>6</i>行</div>
<div class="ab" style="left:264px;top:193px;width:1351px;height:32px;background:#fff;border-bottom:1px solid #b0b0b0"></div>

<div class="ab" style="left:1388px;top:192px;width:1px;height:32px;background:#c0c0c0"></div>
<div class="ab" style="left:1449px;top:192px;width:1px;height:32px;background:#c0c0c0"></div>
<div class="ab" style="left:1522px;top:192px;width:1px;height:32px;background:#c0c0c0"></div>
<div class="ab" style="left:269px;top:198px;width:21px;height:20px;background:#f3f5f3"></div>
<div class="ab" style="left:274px;top:205px;width:12px;height:2px;background:#3d7d3d"></div><div class="ab" style="left:274px;top:210px;width:12px;height:2px;background:#3d7d3d"></div>
<div class="t sm" style="left:298px;top:201px">有<i>&nbsp;</i><i>6</i><i>&nbsp;</i>号码分组<i>.</i><i>.</i><i>.</i><i>.</i><i>.</i><i>.</i></div>
<div class="ab" style="left:1355px;top:200px"><svg width="17" height="17" viewBox="0 0 17 17"><rect x="0.75" y="0.75" width="15.5" height="15.5" fill="#fff" stroke="#3d8f45" stroke-width="1.5"/></svg></div>
<div class="ab" style="left:1615px;top:192px;width:101px;height:32px;background:#fff"></div>
<div class="ab" style="left:1617px;top:193px;width:99px;height:32px;background:linear-gradient(#f8f8f8,#ededed 25%,#eaeaea);border-right:2px solid #6a6a6a;border-bottom:2px solid #6a6a6a;border-left:1px solid #fff"></div>
<div class="ab" style="left:1716px;top:192px;width:2px;height:32px;background:#fff"></div>
<div class="ab" style="left:1718px;top:193px;width:52px;height:32px;background:linear-gradient(#f8f8f8,#ededed 25%,#eaeaea);border-right:2px solid #6a6a6a;border-bottom:2px solid #6a6a6a;border-left:1px solid #fff"></div>
<div class="t sm" style="left:1617px;top:201px;width:97px;text-align:center">查看走势图</div>
<div class="t sm" style="left:1718px;top:201px;width:50px;text-align:center">删除</div>
<div class="ab" style="left:0;top:225px;width:18px;height:32px;background:#f0f0f0;border-bottom:1px solid #111"></div>
<div class="ab" style="left:18px;top:224px;width:1px;height:32px;background:#111"></div>
<div class="ab" style="left:19px;top:225px;width:46px;height:32px;background:#fff;border-bottom:1px solid #a8a8a8"></div>
<div class="ab" style="left:65px;top:224px;width:1px;height:32px;background:#a8a8a8"></div>
<div class="ab" style="left:23px;top:232px"><svg width="17" height="17" viewBox="0 0 17 17"><rect x="0.75" y="0.75" width="15.5" height="15.5" fill="#fff" stroke="#3d8f45" stroke-width="1.5"/></svg></div>
<div class="ab" style="left:66px;top:225px;width:198px;height:32px;background:linear-gradient(#f6f6f6,#ececec 30%,#ececec);border-bottom:2px solid #6e6e6e;border-right:2px solid #707070"></div>
<div class="t sm" style="left:69px;top:233px">断组行列<i>6</i>列</div>
<div class="ab" style="left:264px;top:225px;width:1351px;height:32px;background:#fff;border-bottom:1px solid #b0b0b0"></div>

<div class="ab" style="left:1388px;top:224px;width:1px;height:32px;background:#c0c0c0"></div>
<div class="ab" style="left:1449px;top:224px;width:1px;height:32px;background:#c0c0c0"></div>
<div class="ab" style="left:1522px;top:224px;width:1px;height:32px;background:#c0c0c0"></div>
<div class="ab" style="left:269px;top:230px;width:21px;height:20px;background:#f3f5f3"></div>
<div class="ab" style="left:274px;top:237px;width:12px;height:2px;background:#3d7d3d"></div><div class="ab" style="left:274px;top:242px;width:12px;height:2px;background:#3d7d3d"></div>
<div class="t sm" style="left:298px;top:233px">有<i>&nbsp;</i><i>6</i><i>&nbsp;</i>号码分组<i>.</i><i>.</i><i>.</i><i>.</i><i>.</i><i>.</i></div>
<div class="ab" style="left:1355px;top:232px"><svg width="17" height="17" viewBox="0 0 17 17"><rect x="0.75" y="0.75" width="15.5" height="15.5" fill="#fff" stroke="#3d8f45" stroke-width="1.5"/></svg></div>
<div class="ab" style="left:1615px;top:224px;width:101px;height:32px;background:#fff"></div>
<div class="ab" style="left:1617px;top:225px;width:99px;height:32px;background:linear-gradient(#f8f8f8,#ededed 25%,#eaeaea);border-right:2px solid #6a6a6a;border-bottom:2px solid #6a6a6a;border-left:1px solid #fff"></div>
<div class="ab" style="left:1716px;top:224px;width:2px;height:32px;background:#fff"></div>
<div class="ab" style="left:1718px;top:225px;width:52px;height:32px;background:linear-gradient(#f8f8f8,#ededed 25%,#eaeaea);border-right:2px solid #6a6a6a;border-bottom:2px solid #6a6a6a;border-left:1px solid #fff"></div>
<div class="t sm" style="left:1617px;top:233px;width:97px;text-align:center">查看走势图</div>
<div class="t sm" style="left:1718px;top:233px;width:50px;text-align:center">删除</div>
<div class="ab" style="left:0;top:257px;width:18px;height:32px;background:#f0f0f0;border-bottom:1px solid #111"></div>
<div class="ab" style="left:18px;top:256px;width:1px;height:32px;background:#111"></div>
<div class="ab" style="left:19px;top:257px;width:46px;height:32px;background:#fff;border-bottom:1px solid #a8a8a8"></div>
<div class="ab" style="left:65px;top:256px;width:1px;height:32px;background:#a8a8a8"></div>
<div class="ab" style="left:23px;top:264px"><svg width="19" height="19" viewBox="0 0 19 19" style="overflow:visible"><rect x="0.75" y="0.75" width="15.5" height="15.5" fill="#fff" stroke="#3d8f45" stroke-width="1.5"/><path d="M0.8 10 L4.2 15 L16.5 2.2" fill="none" stroke="#e6101a" stroke-width="3" stroke-linecap="round" stroke-linejoin="round"/></svg></div>
<div class="ab" style="left:66px;top:257px;width:198px;height:32px;background:linear-gradient(#f6f6f6,#ececec 30%,#ececec);border-bottom:2px solid #6e6e6e;border-right:2px solid #707070"></div>
<div class="t bb" style="left:69px;top:263px">奇数个数</div>
<div class="ab" style="left:264px;top:257px;width:1351px;height:32px;background:#fff;border-bottom:1px solid #b0b0b0"></div>

<div class="ab" style="left:1388px;top:256px;width:1px;height:32px;background:#c0c0c0"></div>
<div class="ab" style="left:1449px;top:256px;width:1px;height:32px;background:#c0c0c0"></div>
<div class="ab" style="left:1522px;top:256px;width:1px;height:32px;background:#c0c0c0"></div>
<div class="ab" style="left:269px;top:262px;width:21px;height:20px;background:#f3f5f3"></div>
<div class="ab" style="left:274px;top:269px;width:12px;height:2px;background:#3d7d3d"></div><div class="ab" style="left:274px;top:274px;width:12px;height:2px;background:#3d7d3d"></div>
<div class="t bb" style="left:300px;top:263px"><i>1</i><i>&nbsp;</i><span style="font-weight:normal">个</span><i>,</i><i>2</i><i>&nbsp;</i><span style="font-weight:normal">个</span><i>,</i><i>3</i><i>&nbsp;</i><span style="font-weight:normal">个</span><i>,</i><i>4</i><i>&nbsp;</i><span style="font-weight:normal">个</span><i>,</i><i>5</i><i>&nbsp;</i><span style="font-weight:normal">个</span><i>&nbsp;</i><i>&nbsp;</i><i>&nbsp;</i><i>[</i><i>0</i><i>1</i><i>,</i><i>0</i><i>3</i><i>,</i><i>0</i><i>5</i><i>,</i><i>0</i><i>7</i><i>,</i><i>0</i><i>9</i><i>,</i><i>1</i><i>1</i><i>,</i><i>1</i><i>3</i><i>,</i><i>1</i><i>5</i><i>,</i><i>1</i><i>7</i><i>,</i><i>1</i><i>9</i><i>,</i><i>2</i><i>1</i><i>,</i><i>2</i><i>3</i><i>,</i><i>2</i><i>5</i><i>,</i><i>2</i><i>7</i><i>,</i><i>2</i><i>9</i><i>,</i><i>3</i><i>1</i><i>,</i><i>3</i><i>3</i><i>]</i></div>
<div class="ab" style="left:1355px;top:264px"><svg width="17" height="17" viewBox="0 0 17 17"><rect x="0.75" y="0.75" width="15.5" height="15.5" fill="#fff" stroke="#3d8f45" stroke-width="1.5"/></svg></div>
<div class="ab" style="left:1474px;top:261px"><svg width="22" height="22" viewBox="0 0 22 22"><path d="M1.5 10.5 h4 v10 h-4 z M5.5 11 L9.5 6.5 L10 1.8 C11.8 1.2 13.2 2.6 12.6 5.2 L11.8 8.6 H18.4 C20 8.6 20.6 10.2 19.8 11.2 C20.8 12 20.6 13.6 19.4 14 C20.2 14.8 19.8 16.4 18.6 16.6 C19.2 17.6 18.6 19.2 17.2 19.6 H8 L5.5 18.5" fill="#f4fff8" stroke="#48c48e" stroke-width="1.5" stroke-linejoin="round"/><path d="M12.5 11.6 h5.6 M12.5 14.6 h5.6 M12.5 17.2 h4.8" stroke="#58c898" stroke-width="1"/></svg></div>
<div class="t rt" style="left:1522px;top:265px;width:93px;text-align:center;font-size:12px;color:#c01820"><i>1</i><i>0</i><i>0</i><i>.</i><i>0</i><i>0</i><i>%</i></div>
<div class="ab" style="left:1615px;top:256px;width:101px;height:32px;background:#fff"></div>
<div class="ab" style="left:1617px;top:257px;width:99px;height:32px;background:linear-gradient(#f8f8f8,#ededed 25%,#eaeaea);border-right:2px solid #6a6a6a;border-bottom:2px solid #6a6a6a;border-left:1px solid #fff"></div>
<div class="ab" style="left:1716px;top:256px;width:2px;height:32px;background:#fff"></div>
<div class="ab" style="left:1718px;top:257px;width:52px;height:32px;background:linear-gradient(#f8f8f8,#ededed 25%,#eaeaea);border-right:2px solid #6a6a6a;border-bottom:2px solid #6a6a6a;border-left:1px solid #fff"></div>
<div class="t bb" style="left:1617px;top:263px;width:97px;text-align:center">查看走势图</div>
<div class="t bb" style="left:1718px;top:263px;width:50px;text-align:center">删除</div>
<div class="ab" style="left:0;top:289px;width:18px;height:32px;background:#f0f0f0;border-bottom:1px solid #111"></div>
<div class="ab" style="left:18px;top:288px;width:1px;height:32px;background:#111"></div>
<div class="ab" style="left:19px;top:289px;width:46px;height:32px;background:#fff;border-bottom:1px solid #a8a8a8"></div>
<div class="ab" style="left:65px;top:288px;width:1px;height:32px;background:#a8a8a8"></div>
<div class="ab" style="left:23px;top:296px"><svg width="17" height="17" viewBox="0 0 17 17"><rect x="0.75" y="0.75" width="15.5" height="15.5" fill="#fff" stroke="#3d8f45" stroke-width="1.5"/></svg></div>
<div class="ab" style="left:66px;top:289px;width:198px;height:32px;background:linear-gradient(#f6f6f6,#ececec 30%,#ececec);border-bottom:2px solid #6e6e6e;border-right:2px solid #707070"></div>
<div class="t sm" style="left:69px;top:297px">偶数个数</div>
<div class="ab" style="left:264px;top:289px;width:1351px;height:32px;background:#fff;border-bottom:1px solid #b0b0b0"></div>

<div class="ab" style="left:1388px;top:288px;width:1px;height:32px;background:#c0c0c0"></div>
<div class="ab" style="left:1449px;top:288px;width:1px;height:32px;background:#c0c0c0"></div>
<div class="ab" style="left:1522px;top:288px;width:1px;height:32px;background:#c0c0c0"></div>
<div class="ab" style="left:269px;top:294px;width:21px;height:20px;background:#f3f5f3"></div>
<div class="ab" style="left:274px;top:301px;width:12px;height:2px;background:#3d7d3d"></div><div class="ab" style="left:274px;top:306px;width:12px;height:2px;background:#3d7d3d"></div>
<div class="t sm" style="left:298px;top:297px"><b><i>0</i></b><i>&nbsp;</i>个<i>,</i><b><i>1</i></b><i>&nbsp;</i>个<i>,</i><b><i>2</i></b><i>&nbsp;</i>个<i>,</i><b><i>3</i></b><i>&nbsp;</i>个<i>,</i><b><i>4</i></b><i>&nbsp;</i>个<i>,</i><b><i>5</i></b><i>&nbsp;</i>个<i>&nbsp;</i><i>&nbsp;</i><i>&nbsp;</i><i>[</i><i>0</i><i>2</i><i>,</i><i>0</i><i>4</i><i>,</i><i>0</i><i>6</i><i>,</i><i>0</i><i>8</i><i>,</i><i>1</i><i>0</i><i>,</i><i>1</i><i>2</i><i>,</i><i>1</i><i>4</i><i>,</i><i>1</i><i>6</i><i>,</i><i>1</i><i>8</i><i>,</i><i>2</i><i>0</i><i>,</i><i>2</i><i>2</i><i>,</i><i>2</i><i>4</i><i>,</i><i>2</i><i>6</i><i>,</i><i>2</i><i>8</i><i>,</i><i>3</i><i>0</i><i>,</i><i>3</i><i>2</i><i>]</i></div>
<div class="ab" style="left:1355px;top:296px"><svg width="17" height="17" viewBox="0 0 17 17"><rect x="0.75" y="0.75" width="15.5" height="15.5" fill="#fff" stroke="#3d8f45" stroke-width="1.5"/></svg></div>
<div class="ab" style="left:1615px;top:288px;width:101px;height:32px;background:#fff"></div>
<div class="ab" style="left:1617px;top:289px;width:99px;height:32px;background:linear-gradient(#f8f8f8,#ededed 25%,#eaeaea);border-right:2px solid #6a6a6a;border-bottom:2px solid #6a6a6a;border-left:1px solid #fff"></div>
<div class="ab" style="left:1716px;top:288px;width:2px;height:32px;background:#fff"></div>
<div class="ab" style="left:1718px;top:289px;width:52px;height:32px;background:linear-gradient(#f8f8f8,#ededed 25%,#eaeaea);border-right:2px solid #6a6a6a;border-bottom:2px solid #6a6a6a;border-left:1px solid #fff"></div>
<div class="t sm" style="left:1617px;top:297px;width:97px;text-align:center">查看走势图</div>
<div class="t sm" style="left:1718px;top:297px;width:50px;text-align:center">删除</div>
<div class="ab" style="left:0;top:321px;width:18px;height:32px;background:#f0f0f0;border-bottom:1px solid #111"></div>
<div class="ab" style="left:18px;top:320px;width:1px;height:32px;background:#111"></div>
<div class="ab" style="left:19px;top:321px;width:46px;height:32px;background:#fff;border-bottom:1px solid #a8a8a8"></div>
<div class="ab" style="left:65px;top:320px;width:1px;height:32px;background:#a8a8a8"></div>
<div class="ab" style="left:23px;top:328px"><svg width="17" height="17" viewBox="0 0 17 17"><rect x="0.75" y="0.75" width="15.5" height="15.5" fill="#fff" stroke="#3d8f45" stroke-width="1.5"/></svg></div>
<div class="ab" style="left:66px;top:321px;width:198px;height:32px;background:linear-gradient(#f6f6f6,#ececec 30%,#ececec);border-bottom:2px solid #6e6e6e;border-right:2px solid #707070"></div>
<div class="t sm" style="left:69px;top:329px">尾组合<i class=u>I</i><i class=u>D</i></div>
<div class="ab" style="left:264px;top:321px;width:1351px;height:32px;background:#fff;border-bottom:1px solid #b0b0b0"></div>

<div class="ab" style="left:1388px;top:320px;width:1px;height:32px;background:#c0c0c0"></div>
<div class="ab" style="left:1449px;top:320px;width:1px;height:32px;background:#c0c0c0"></div>
<div class="ab" style="left:1522px;top:320px;width:1px;height:32px;background:#c0c0c0"></div>
<div class="ab" style="left:269px;top:326px;width:21px;height:20px;background:#f3f5f3"></div>
<div class="ab" style="left:274px;top:333px;width:12px;height:2px;background:#3d7d3d"></div><div class="ab" style="left:274px;top:338px;width:12px;height:2px;background:#3d7d3d"></div>
<div class="t sm" style="left:298px;top:329px">排除掉最近<i>&nbsp;</i><i>1</i><i>0</i><i>0</i><i>0</i><i>&nbsp;</i>期开出过的值<i>.</i></div>
<div class="ab" style="left:1355px;top:328px"><svg width="17" height="17" viewBox="0 0 17 17"><rect x="0.75" y="0.75" width="15.5" height="15.5" fill="#fff" stroke="#3d8f45" stroke-width="1.5"/></svg></div>
<div class="ab" style="left:1615px;top:320px;width:101px;height:32px;background:#fff"></div>
<div class="ab" style="left:1617px;top:321px;width:99px;height:32px;background:linear-gradient(#f8f8f8,#ededed 25%,#eaeaea);border-right:2px solid #6a6a6a;border-bottom:2px solid #6a6a6a;border-left:1px solid #fff"></div>
<div class="ab" style="left:1716px;top:320px;width:2px;height:32px;background:#fff"></div>
<div class="ab" style="left:1718px;top:321px;width:52px;height:32px;background:linear-gradient(#f8f8f8,#ededed 25%,#eaeaea);border-right:2px solid #6a6a6a;border-bottom:2px solid #6a6a6a;border-left:1px solid #fff"></div>
<div class="t sm" style="left:1617px;top:329px;width:97px;text-align:center">查看走势图</div>
<div class="t sm" style="left:1718px;top:329px;width:50px;text-align:center">删除</div>
<div class="ab" style="left:0;top:353px;width:18px;height:32px;background:#f0f0f0;border-bottom:1px solid #111"></div>
<div class="ab" style="left:18px;top:352px;width:1px;height:32px;background:#111"></div>
<div class="ab" style="left:19px;top:353px;width:46px;height:32px;background:#fff;border-bottom:1px solid #a8a8a8"></div>
<div class="ab" style="left:65px;top:352px;width:1px;height:32px;background:#a8a8a8"></div>
<div class="ab" style="left:23px;top:360px"><svg width="19" height="19" viewBox="0 0 19 19" style="overflow:visible"><rect x="0.75" y="0.75" width="15.5" height="15.5" fill="#fff" stroke="#3d8f45" stroke-width="1.5"/><path d="M0.8 10 L4.2 15 L16.5 2.2" fill="none" stroke="#e6101a" stroke-width="3" stroke-linecap="round" stroke-linejoin="round"/></svg></div>
<div class="ab" style="left:66px;top:353px;width:198px;height:32px;background:linear-gradient(#f6f6f6,#ececec 30%,#ececec);border-bottom:2px solid #6e6e6e;border-right:2px solid #707070"></div>
<div class="t bb" style="left:69px;top:359px">尾数</div>
<div class="ab" style="left:264px;top:353px;width:1351px;height:32px;background:#fff;border-bottom:1px solid #b0b0b0"></div>

<div class="ab" style="left:1388px;top:352px;width:1px;height:32px;background:#c0c0c0"></div>
<div class="ab" style="left:1449px;top:352px;width:1px;height:32px;background:#c0c0c0"></div>
<div class="ab" style="left:1522px;top:352px;width:1px;height:32px;background:#c0c0c0"></div>
<div class="ab" style="left:269px;top:358px;width:21px;height:20px;background:#f3f5f3"></div>
<div class="ab" style="left:274px;top:365px;width:12px;height:2px;background:#3d7d3d"></div><div class="ab" style="left:274px;top:370px;width:12px;height:2px;background:#3d7d3d"></div>
<div class="t bb" style="left:300px;top:359px">排除掉最近<i>&nbsp;</i><i>3</i><i>0</i><i>&nbsp;</i>期开出过的值<i>.</i></div>
<div class="ab" style="left:1355px;top:360px"><svg width="19" height="19" viewBox="0 0 19 19" style="overflow:visible"><rect x="0.75" y="0.75" width="15.5" height="15.5" fill="#fff" stroke="#3d8f45" stroke-width="1.5"/><path d="M0.8 10 L4.2 15 L16.5 2.2" fill="none" stroke="#e6101a" stroke-width="3" stroke-linecap="round" stroke-linejoin="round"/></svg></div>
<div class="t" style="left:1414px;top:360px;font-family:'Liberation Serif',serif;font-weight:bold;font-size:17px;color:#1a1a9a">I</div>
<div class="ab" style="left:1474px;top:357px"><svg width="22" height="22" viewBox="0 0 22 22"><path d="M1.5 10.5 h4 v10 h-4 z M5.5 11 L9.5 6.5 L10 1.8 C11.8 1.2 13.2 2.6 12.6 5.2 L11.8 8.6 H18.4 C20 8.6 20.6 10.2 19.8 11.2 C20.8 12 20.6 13.6 19.4 14 C20.2 14.8 19.8 16.4 18.6 16.6 C19.2 17.6 18.6 19.2 17.2 19.6 H8 L5.5 18.5" fill="#f4fff8" stroke="#48c48e" stroke-width="1.5" stroke-linejoin="round"/><path d="M12.5 11.6 h5.6 M12.5 14.6 h5.6 M12.5 17.2 h4.8" stroke="#58c898" stroke-width="1"/></svg></div>
<div class="t rt" style="left:1522px;top:361px;width:93px;text-align:center;font-size:12px;color:#c01820"><i>8</i><i>0</i><i>.</i><i>0</i><i>0</i><i>%</i></div>
<div class="ab" style="left:1615px;top:352px;width:101px;height:32px;background:#fff"></div>
<div class="ab" style="left:1617px;top:353px;width:99px;height:32px;background:linear-gradient(#f8f8f8,#ededed 25%,#eaeaea);border-right:2px solid #6a6a6a;border-bottom:2px solid #6a6a6a;border-left:1px solid #fff"></div>
<div class="ab" style="left:1716px;top:352px;width:2px;height:32px;background:#fff"></div>
<div class="ab" style="left:1718px;top:353px;width:52px;height:32px;background:linear-gradient(#f8f8f8,#ededed 25%,#eaeaea);border-right:2px solid #6a6a6a;border-bottom:2px solid #6a6a6a;border-left:1px solid #fff"></div>
<div class="t bb" style="left:1617px;top:359px;width:97px;text-align:center">查看走势图</div>
<div class="t bb" style="left:1718px;top:359px;width:50px;text-align:center">删除</div>
<div class="ab" style="left:0;top:385px;width:18px;height:32px;background:#f0f0f0;border-bottom:1px solid #111"></div>
<div class="ab" style="left:18px;top:384px;width:1px;height:32px;background:#111"></div>
<div class="ab" style="left:19px;top:385px;width:46px;height:32px;background:#fff;border-bottom:1px solid #a8a8a8"></div>
<div class="ab" style="left:65px;top:384px;width:1px;height:32px;background:#a8a8a8"></div>
<div class="ab" style="left:23px;top:392px"><svg width="17" height="17" viewBox="0 0 17 17"><rect x="0.75" y="0.75" width="15.5" height="15.5" fill="#fff" stroke="#3d8f45" stroke-width="1.5"/></svg></div>
<div class="ab" style="left:66px;top:385px;width:198px;height:32px;background:linear-gradient(#f6f6f6,#ececec 30%,#ececec);border-bottom:2px solid #6e6e6e;border-right:2px solid #707070"></div>
<div class="t sm" style="left:69px;top:393px">尾数连号</div>
<div class="ab" style="left:264px;top:385px;width:1351px;height:32px;background:#fff;border-bottom:1px solid #b0b0b0"></div>

<div class="ab" style="left:1388px;top:384px;width:1px;height:32px;background:#c0c0c0"></div>
<div class="ab" style="left:1449px;top:384px;width:1px;height:32px;background:#c0c0c0"></div>
<div class="ab" style="left:1522px;top:384px;width:1px;height:32px;background:#c0c0c0"></div>
<div class="ab" style="left:269px;top:390px;width:21px;height:20px;background:#f3f5f3"></div>
<div class="ab" style="left:274px;top:397px;width:12px;height:2px;background:#3d7d3d"></div><div class="ab" style="left:274px;top:402px;width:12px;height:2px;background:#3d7d3d"></div>
<div class="t sm" style="left:298px;top:393px"><i>0</i><i>,</i><i>2</i><i>,</i><i>2</i><i>+</i><i>2</i><i>,</i><i>3</i><i>,</i><i>3</i><i>+</i><i>2</i><i>,</i><i>4</i><i>,</i><i>5</i></div>
<div class="ab" style="left:1355px;top:392px"><svg width="17" height="17" viewBox="0 0 17 17"><rect x="0.75" y="0.75" width="15.5" height="15.5" fill="#fff" stroke="#3d8f45" stroke-width="1.5"/></svg></div>
<div class="ab" style="left:1615px;top:384px;width:101px;height:32px;background:#fff"></div>
<div class="ab" style="left:1617px;top:385px;width:99px;height:32px;background:linear-gradient(#f8f8f8,#ededed 25%,#eaeaea);border-right:2px solid #6a6a6a;border-bottom:2px solid #6a6a6a;border-left:1px solid #fff"></div>
<div class="ab" style="left:1716px;top:384px;width:2px;height:32px;background:#fff"></div>
<div class="ab" style="left:1718px;top:385px;width:52px;height:32px;background:linear-gradient(#f8f8f8,#ededed 25%,#eaeaea);border-right:2px solid #6a6a6a;border-bottom:2px solid #6a6a6a;border-left:1px solid #fff"></div>
<div class="t sm" style="left:1617px;top:393px;width:97px;text-align:center">查看走势图</div>
<div class="t sm" style="left:1718px;top:393px;width:50px;text-align:center">删除</div>
<div class="ab" style="left:0;top:417px;width:18px;height:32px;background:#f0f0f0;border-bottom:1px solid #111"></div>
<div class="ab" style="left:18px;top:416px;width:1px;height:32px;background:#111"></div>
<div class="ab" style="left:19px;top:417px;width:46px;height:32px;background:#fff;border-bottom:1px solid #a8a8a8"></div>
<div class="ab" style="left:65px;top:416px;width:1px;height:32px;background:#a8a8a8"></div>
<div class="ab" style="left:23px;top:424px"><svg width="19" height="19" viewBox="0 0 19 19" style="overflow:visible"><rect x="0.75" y="0.75" width="15.5" height="15.5" fill="#fff" stroke="#3d8f45" stroke-width="1.5"/><path d="M0.8 10 L4.2 15 L16.5 2.2" fill="none" stroke="#e6101a" stroke-width="3" stroke-linecap="round" stroke-linejoin="round"/></svg></div>
<div class="ab" style="left:66px;top:417px;width:198px;height:32px;background:linear-gradient(#f6f6f6,#ececec 30%,#ececec);border-bottom:2px solid #6e6e6e;border-right:2px solid #707070"></div>
<div class="t bb" style="left:69px;top:423px">尾数组数</div>
<div class="ab" style="left:264px;top:417px;width:1351px;height:32px;background:#fff;border-bottom:1px solid #b0b0b0"></div>

<div class="ab" style="left:1388px;top:416px;width:1px;height:32px;background:#c0c0c0"></div>
<div class="ab" style="left:1449px;top:416px;width:1px;height:32px;background:#c0c0c0"></div>
<div class="ab" style="left:1522px;top:416px;width:1px;height:32px;background:#c0c0c0"></div>
<div class="ab" style="left:269px;top:422px;width:21px;height:20px;background:#f3f5f3"></div>
<div class="ab" style="left:274px;top:429px;width:12px;height:2px;background:#3d7d3d"></div><div class="ab" style="left:274px;top:434px;width:12px;height:2px;background:#3d7d3d"></div>
<div class="t bb" style="left:300px;top:423px"><i>4</i><i>&nbsp;</i><span style="font-weight:normal">个</span><i>,</i><i>5</i><i>&nbsp;</i><span style="font-weight:normal">个</span><i>,</i><i>6</i><i>&nbsp;</i><span style="font-weight:normal">个</span><i>&nbsp;</i><i>&nbsp;</i><i>&nbsp;</i><i>[</i><i>0</i><i>,</i><i>1</i><i>,</i><i>2</i><i>,</i><i>3</i><i>,</i><i>4</i><i>,</i><i>5</i><i>,</i><i>6</i><i>,</i><i>7</i><i>,</i><i>8</i><i>,</i><i>9</i><i>]</i></div>
<div class="ab" style="left:1355px;top:424px"><svg width="17" height="17" viewBox="0 0 17 17"><rect x="0.75" y="0.75" width="15.5" height="15.5" fill="#fff" stroke="#3d8f45" stroke-width="1.5"/></svg></div>
<div class="ab" style="left:1474px;top:421px"><svg width="22" height="22" viewBox="0 0 22 22"><path d="M1.5 10.5 h4 v10 h-4 z M5.5 11 L9.5 6.5 L10 1.8 C11.8 1.2 13.2 2.6 12.6 5.2 L11.8 8.6 H18.4 C20 8.6 20.6 10.2 19.8 11.2 C20.8 12 20.6 13.6 19.4 14 C20.2 14.8 19.8 16.4 18.6 16.6 C19.2 17.6 18.6 19.2 17.2 19.6 H8 L5.5 18.5" fill="#f4fff8" stroke="#48c48e" stroke-width="1.5" stroke-linejoin="round"/><path d="M12.5 11.6 h5.6 M12.5 14.6 h5.6 M12.5 17.2 h4.8" stroke="#58c898" stroke-width="1"/></svg></div>
<div class="t rt" style="left:1522px;top:425px;width:93px;text-align:center;font-size:12px;color:#c01820"><i>1</i><i>0</i><i>0</i><i>.</i><i>0</i><i>0</i><i>%</i></div>
<div class="ab" style="left:1615px;top:416px;width:101px;height:32px;background:#fff"></div>
<div class="ab" style="left:1617px;top:417px;width:99px;height:32px;background:linear-gradient(#f8f8f8,#ededed 25%,#eaeaea);border-right:2px solid #6a6a6a;border-bottom:2px solid #6a6a6a;border-left:1px solid #fff"></div>
<div class="ab" style="left:1716px;top:416px;width:2px;height:32px;background:#fff"></div>
<div class="ab" style="left:1718px;top:417px;width:52px;height:32px;background:linear-gradient(#f8f8f8,#ededed 25%,#eaeaea);border-right:2px solid #6a6a6a;border-bottom:2px solid #6a6a6a;border-left:1px solid #fff"></div>
<div class="t bb" style="left:1617px;top:423px;width:97px;text-align:center">查看走势图</div>
<div class="t bb" style="left:1718px;top:423px;width:50px;text-align:center">删除</div>
<div class="ab" style="left:0;top:449px;width:18px;height:32px;background:#f0f0f0;border-bottom:1px solid #111"></div>
<div class="ab" style="left:18px;top:448px;width:1px;height:32px;background:#111"></div>
<div class="ab" style="left:19px;top:449px;width:46px;height:32px;background:#fff;border-bottom:1px solid #a8a8a8"></div>
<div class="ab" style="left:65px;top:448px;width:1px;height:32px;background:#a8a8a8"></div>
<div class="ab" style="left:23px;top:456px"><svg width="19" height="19" viewBox="0 0 19 19" style="overflow:visible"><rect x="0.75" y="0.75" width="15.5" height="15.5" fill="#fff" stroke="#3d8f45" stroke-width="1.5"/><path d="M0.8 10 L4.2 15 L16.5 2.2" fill="none" stroke="#e6101a" stroke-width="3" stroke-linecap="round" stroke-linejoin="round"/></svg></div>
<div class="ab" style="left:66px;top:449px;width:198px;height:32px;background:linear-gradient(#f6f6f6,#ececec 30%,#ececec);border-bottom:2px solid #6e6e6e;border-right:2px solid #707070"></div>
<div class="t bb" style="left:69px;top:455px">红球<i>1</i><i>2</i><i>3</i><i>4</i><i>5</i>码的尾</div>
<div class="ab" style="left:264px;top:449px;width:1351px;height:32px;background:#fff;border-bottom:1px solid #b0b0b0"></div>

<div class="ab" style="left:1388px;top:448px;width:1px;height:32px;background:#c0c0c0"></div>
<div class="ab" style="left:1449px;top:448px;width:1px;height:32px;background:#c0c0c0"></div>
<div class="ab" style="left:1522px;top:448px;width:1px;height:32px;background:#c0c0c0"></div>
<div class="ab" style="left:269px;top:454px;width:21px;height:20px;background:#f3f5f3"></div>
<div class="ab" style="left:274px;top:461px;width:12px;height:2px;background:#3d7d3d"></div><div class="ab" style="left:274px;top:466px;width:12px;height:2px;background:#3d7d3d"></div>
<div class="t bb" style="left:300px;top:455px">排除掉最近<i>&nbsp;</i><i>7</i><i>&nbsp;</i>期开出过的值<i>.</i></div>
<div class="ab" style="left:1355px;top:456px"><svg width="19" height="19" viewBox="0 0 19 19" style="overflow:visible"><rect x="0.75" y="0.75" width="15.5" height="15.5" fill="#fff" stroke="#3d8f45" stroke-width="1.5"/><path d="M0.8 10 L4.2 15 L16.5 2.2" fill="none" stroke="#e6101a" stroke-width="3" stroke-linecap="round" stroke-linejoin="round"/></svg></div>
<div class="t" style="left:1414px;top:456px;font-family:'Liberation Serif',serif;font-weight:bold;font-size:17px;color:#1a1a9a">I</div>
<div class="ab" style="left:1474px;top:453px"><svg width="22" height="22" viewBox="0 0 22 22"><path d="M1.5 10.5 h4 v10 h-4 z M5.5 11 L9.5 6.5 L10 1.8 C11.8 1.2 13.2 2.6 12.6 5.2 L11.8 8.6 H18.4 C20 8.6 20.6 10.2 19.8 11.2 C20.8 12 20.6 13.6 19.4 14 C20.2 14.8 19.8 16.4 18.6 16.6 C19.2 17.6 18.6 19.2 17.2 19.6 H8 L5.5 18.5" fill="#f4fff8" stroke="#48c48e" stroke-width="1.5" stroke-linejoin="round"/><path d="M12.5 11.6 h5.6 M12.5 14.6 h5.6 M12.5 17.2 h4.8" stroke="#58c898" stroke-width="1"/></svg></div>
<div class="t rt" style="left:1522px;top:457px;width:93px;text-align:center;font-size:12px;color:#c01820"><i>1</i><i>0</i><i>0</i><i>.</i><i>0</i><i>0</i><i>%</i></div>
<div class="ab" style="left:1615px;top:448px;width:101px;height:32px;background:#fff"></div>
<div class="ab" style="left:1617px;top:449px;width:99px;height:32px;background:linear-gradient(#f8f8f8,#ededed 25%,#eaeaea);border-right:2px solid #6a6a6a;border-bottom:2px solid #6a6a6a;border-left:1px solid #fff"></div>
<div class="ab" style="left:1716px;top:448px;width:2px;height:32px;background:#fff"></div>
<div class="ab" style="left:1718px;top:449px;width:52px;height:32px;background:linear-gradient(#f8f8f8,#ededed 25%,#eaeaea);border-right:2px solid #6a6a6a;border-bottom:2px solid #6a6a6a;border-left:1px solid #fff"></div>
<div class="t bb" style="left:1617px;top:455px;width:97px;text-align:center">查看走势图</div>
<div class="t bb" style="left:1718px;top:455px;width:50px;text-align:center">删除</div>
<div class="ab" style="left:0;top:481px;width:18px;height:32px;background:#f0f0f0;border-bottom:1px solid #111"></div>
<div class="ab" style="left:18px;top:480px;width:1px;height:32px;background:#111"></div>
<div class="ab" style="left:19px;top:481px;width:46px;height:32px;background:#fff;border-bottom:1px solid #a8a8a8"></div>
<div class="ab" style="left:65px;top:480px;width:1px;height:32px;background:#a8a8a8"></div>
<div class="ab" style="left:23px;top:488px"><svg width="19" height="19" viewBox="0 0 19 19" style="overflow:visible"><rect x="0.75" y="0.75" width="15.5" height="15.5" fill="#fff" stroke="#3d8f45" stroke-width="1.5"/><path d="M0.8 10 L4.2 15 L16.5 2.2" fill="none" stroke="#e6101a" stroke-width="3" stroke-linecap="round" stroke-linejoin="round"/></svg></div>
<div class="ab" style="left:66px;top:481px;width:198px;height:32px;background:linear-gradient(#f6f6f6,#ececec 30%,#ececec);border-bottom:2px solid #6e6e6e;border-right:2px solid #707070"></div>
<div class="t bb" style="left:69px;top:487px">红球<i>1</i><i>2</i><i>3</i><i>4</i><i>6</i>码的尾</div>
<div class="ab" style="left:264px;top:481px;width:1351px;height:32px;background:#fff;border-bottom:1px solid #b0b0b0"></div>

<div class="ab" style="left:1388px;top:480px;width:1px;height:32px;background:#c0c0c0"></div>
<div class="ab" style="left:1449px;top:480px;width:1px;height:32px;background:#c0c0c0"></div>
<div class="ab" style="left:1522px;top:480px;width:1px;height:32px;background:#c0c0c0"></div>
<div class="ab" style="left:269px;top:486px;width:21px;height:20px;background:#f3f5f3"></div>
<div class="ab" style="left:274px;top:493px;width:12px;height:2px;background:#3d7d3d"></div><div class="ab" style="left:274px;top:498px;width:12px;height:2px;background:#3d7d3d"></div>
<div class="t bb" style="left:300px;top:487px">排除掉最近<i>&nbsp;</i><i>7</i><i>&nbsp;</i>期开出过的值<i>.</i></div>
<div class="ab" style="left:1355px;top:488px"><svg width="19" height="19" viewBox="0 0 19 19" style="overflow:visible"><rect x="0.75" y="0.75" width="15.5" height="15.5" fill="#fff" stroke="#3d8f45" stroke-width="1.5"/><path d="M0.8 10 L4.2 15 L16.5 2.2" fill="none" stroke="#e6101a" stroke-width="3" stroke-linecap="round" stroke-linejoin="round"/></svg></div>
<div class="t" style="left:1414px;top:488px;font-family:'Liberation Serif',serif;font-weight:bold;font-size:17px;color:#1a1a9a">I</div>
<div class="ab" style="left:1472px;top:486px"><svg width="24" height="20" viewBox="0 0 24 20"><path d="M2 1.5 L22 18.5 M22 1.5 L2 18.5" stroke="#d81820" stroke-width="4" stroke-linecap="butt"/></svg></div>
<div class="t rt" style="left:1522px;top:489px;width:93px;text-align:center;font-size:12px;color:#c01820"><i>9</i><i>0</i><i>.</i><i>0</i><i>0</i><i>%</i></div>
<div class="ab" style="left:1615px;top:480px;width:101px;height:32px;background:#fff"></div>
<div class="ab" style="left:1617px;top:481px;width:99px;height:32px;background:linear-gradient(#f8f8f8,#ededed 25%,#eaeaea);border-right:2px solid #6a6a6a;border-bottom:2px solid #6a6a6a;border-left:1px solid #fff"></div>
<div class="ab" style="left:1716px;top:480px;width:2px;height:32px;background:#fff"></div>
<div class="ab" style="left:1718px;top:481px;width:52px;height:32px;background:linear-gradient(#f8f8f8,#ededed 25%,#eaeaea);border-right:2px solid #6a6a6a;border-bottom:2px solid #6a6a6a;border-left:1px solid #fff"></div>
<div class="t bb" style="left:1617px;top:487px;width:97px;text-align:center">查看走势图</div>
<div class="t bb" style="left:1718px;top:487px;width:50px;text-align:center">删除</div>
<div class="ab" style="left:0;top:513px;width:18px;height:32px;background:#f0f0f0;border-bottom:1px solid #111"></div>
<div class="ab" style="left:18px;top:512px;width:1px;height:32px;background:#111"></div>
<div class="ab" style="left:19px;top:513px;width:46px;height:32px;background:#fff;border-bottom:1px solid #a8a8a8"></div>
<div class="ab" style="left:65px;top:512px;width:1px;height:32px;background:#a8a8a8"></div>
<div class="ab" style="left:23px;top:520px"><svg width="19" height="19" viewBox="0 0 19 19" style="overflow:visible"><rect x="0.75" y="0.75" width="15.5" height="15.5" fill="#fff" stroke="#3d8f45" stroke-width="1.5"/><path d="M0.8 10 L4.2 15 L16.5 2.2" fill="none" stroke="#e6101a" stroke-width="3" stroke-linecap="round" stroke-linejoin="round"/></svg></div>
<div class="ab" style="left:66px;top:513px;width:198px;height:32px;background:linear-gradient(#f6f6f6,#ececec 30%,#ececec);border-bottom:2px solid #6e6e6e;border-right:2px solid #707070"></div>
<div class="t bb" style="left:69px;top:519px">红球<i>1</i><i>2</i><i>3</i><i>5</i><i>6</i>码的尾</div>
<div class="ab" style="left:264px;top:513px;width:1351px;height:32px;background:#fff;border-bottom:1px solid #b0b0b0"></div>

<div class="ab" style="left:1388px;top:512px;width:1px;height:32px;background:#c0c0c0"></div>
<div class="ab" style="left:1449px;top:512px;width:1px;height:32px;background:#c0c0c0"></div>
<div class="ab" style="left:1522px;top:512px;width:1px;height:32px;background:#c0c0c0"></div>
<div class="ab" style="left:269px;top:518px;width:21px;height:20px;background:#f3f5f3"></div>
<div class="ab" style="left:274px;top:525px;width:12px;height:2px;background:#3d7d3d"></div><div class="ab" style="left:274px;top:530px;width:12px;height:2px;background:#3d7d3d"></div>
<div class="t bb" style="left:300px;top:519px">排除掉最近<i>&nbsp;</i><i>7</i><i>&nbsp;</i>期开出过的值<i>.</i></div>
<div class="ab" style="left:1355px;top:520px"><svg width="19" height="19" viewBox="0 0 19 19" style="overflow:visible"><rect x="0.75" y="0.75" width="15.5" height="15.5" fill="#fff" stroke="#3d8f45" stroke-width="1.5"/><path d="M0.8 10 L4.2 15 L16.5 2.2" fill="none" stroke="#e6101a" stroke-width="3" stroke-linecap="round" stroke-linejoin="round"/></svg></div>
<div class="t" style="left:1414px;top:520px;font-family:'Liberation Serif',serif;font-weight:bold;font-size:17px;color:#1a1a9a">I</div>
<div class="ab" style="left:1474px;top:517px"><svg width="22" height="22" viewBox="0 0 22 22"><path d="M1.5 10.5 h4 v10 h-4 z M5.5 11 L9.5 6.5 L10 1.8 C11.8 1.2 13.2 2.6 12.6 5.2 L11.8 8.6 H18.4 C20 8.6 20.6 10.2 19.8 11.2 C20.8 12 20.6 13.6 19.4 14 C20.2 14.8 19.8 16.4 18.6 16.6 C19.2 17.6 18.6 19.2 17.2 19.6 H8 L5.5 18.5" fill="#f4fff8" stroke="#48c48e" stroke-width="1.5" stroke-linejoin="round"/><path d="M12.5 11.6 h5.6 M12.5 14.6 h5.6 M12.5 17.2 h4.8" stroke="#58c898" stroke-width="1"/></svg></div>
<div class="t rt" style="left:1522px;top:521px;width:93px;text-align:center;font-size:12px;color:#c01820"><i>1</i><i>0</i><i>0</i><i>.</i><i>0</i><i>0</i><i>%</i></div>
<div class="ab" style="left:1615px;top:512px;width:101px;height:32px;background:#fff"></div>
<div class="ab" style="left:1617px;top:513px;width:99px;height:32px;background:linear-gradient(#f8f8f8,#ededed 25%,#eaeaea);border-right:2px solid #6a6a6a;border-bottom:2px solid #6a6a6a;border-left:1px solid #fff"></div>
<div class="ab" style="left:1716px;top:512px;width:2px;height:32px;background:#fff"></div>
<div class="ab" style="left:1718px;top:513px;width:52px;height:32px;background:linear-gradient(#f8f8f8,#ededed 25%,#eaeaea);border-right:2px solid #6a6a6a;border-bottom:2px solid #6a6a6a;border-left:1px solid #fff"></div>
<div class="t bb" style="left:1617px;top:519px;width:97px;text-align:center">查看走势图</div>
<div class="t bb" style="left:1718px;top:519px;width:50px;text-align:center">删除</div>
<div class="ab" style="left:0;top:545px;width:18px;height:32px;background:#f0f0f0;border-bottom:1px solid #111"></div>
<div class="ab" style="left:18px;top:544px;width:1px;height:32px;background:#111"></div>
<div class="ab" style="left:19px;top:545px;width:46px;height:32px;background:#fff;border-bottom:1px solid #a8a8a8"></div>
<div class="ab" style="left:65px;top:544px;width:1px;height:32px;background:#a8a8a8"></div>
<div class="ab" style="left:23px;top:552px"><svg width="19" height="19" viewBox="0 0 19 19" style="overflow:visible"><rect x="0.75" y="0.75" width="15.5" height="15.5" fill="#fff" stroke="#3d8f45" stroke-width="1.5"/><path d="M0.8 10 L4.2 15 L16.5 2.2" fill="none" stroke="#e6101a" stroke-width="3" stroke-linecap="round" stroke-linejoin="round"/></svg></div>
<div class="ab" style="left:66px;top:545px;width:198px;height:32px;background:linear-gradient(#f6f6f6,#ececec 30%,#ececec);border-bottom:2px solid #6e6e6e;border-right:2px solid #707070"></div>
<div class="t bb" style="left:69px;top:551px">红球<i>1</i><i>2</i><i>4</i><i>5</i><i>6</i>码的尾</div>
<div class="ab" style="left:264px;top:545px;width:1351px;height:32px;background:#fff;border-bottom:1px solid #b0b0b0"></div>

<div class="ab" style="left:1388px;top:544px;width:1px;height:32px;background:#c0c0c0"></div>
<div class="ab" style="left:1449px;top:544px;width:1px;height:32px;background:#c0c0c0"></div>
<div class="ab" style="left:1522px;top:544px;width:1px;height:32px;background:#c0c0c0"></div>
<div class="ab" style="left:269px;top:550px;width:21px;height:20px;background:#f3f5f3"></div>
<div class="ab" style="left:274px;top:557px;width:12px;height:2px;background:#3d7d3d"></div><div class="ab" style="left:274px;top:562px;width:12px;height:2px;background:#3d7d3d"></div>
<div class="t bb" style="left:300px;top:551px">排除掉最近<i>&nbsp;</i><i>7</i><i>&nbsp;</i>期开出过的值<i>.</i></div>
<div class="ab" style="left:1355px;top:552px"><svg width="19" height="19" viewBox="0 0 19 19" style="overflow:visible"><rect x="0.75" y="0.75" width="15.5" height="15.5" fill="#fff" stroke="#3d8f45" stroke-width="1.5"/><path d="M0.8 10 L4.2 15 L16.5 2.2" fill="none" stroke="#e6101a" stroke-width="3" stroke-linecap="round" stroke-linejoin="round"/></svg></div>
<div class="t" style="left:1414px;top:552px;font-family:'Liberation Serif',serif;font-weight:bold;font-size:17px;color:#1a1a9a">I</div>
<div class="ab" style="left:1474px;top:549px"><svg width="22" height="22" viewBox="0 0 22 22"><path d="M1.5 10.5 h4 v10 h-4 z M5.5 11 L9.5 6.5 L10 1.8 C11.8 1.2 13.2 2.6 12.6 5.2 L11.8 8.6 H18.4 C20 8.6 20.6 10.2 19.8 11.2 C20.8 12 20.6 13.6 19.4 14 C20.2 14.8 19.8 16.4 18.6 16.6 C19.2 17.6 18.6 19.2 17.2 19.6 H8 L5.5 18.5" fill="#f4fff8" stroke="#48c48e" stroke-width="1.5" stroke-linejoin="round"/><path d="M12.5 11.6 h5.6 M12.5 14.6 h5.6 M12.5 17.2 h4.8" stroke="#58c898" stroke-width="1"/></svg></div>
<div class="t rt" style="left:1522px;top:553px;width:93px;text-align:center;font-size:12px;color:#c01820"><i>9</i><i>0</i><i>.</i><i>0</i><i>0</i><i>%</i></div>
<div class="ab" style="left:1615px;top:544px;width:101px;height:32px;background:#fff"></div>
<div class="ab" style="left:1617px;top:545px;width:99px;height:32px;background:linear-gradient(#f8f8f8,#ededed 25%,#eaeaea);border-right:2px solid #6a6a6a;border-bottom:2px solid #6a6a6a;border-left:1px solid #fff"></div>
<div class="ab" style="left:1716px;top:544px;width:2px;height:32px;background:#fff"></div>
<div class="ab" style="left:1718px;top:545px;width:52px;height:32px;background:linear-gradient(#f8f8f8,#ededed 25%,#eaeaea);border-right:2px solid #6a6a6a;border-bottom:2px solid #6a6a6a;border-left:1px solid #fff"></div>
<div class="t bb" style="left:1617px;top:551px;width:97px;text-align:center">查看走势图</div>
<div class="t bb" style="left:1718px;top:551px;width:50px;text-align:center">删除</div>
<div class="ab" style="left:0;top:577px;width:18px;height:32px;background:#f0f0f0;border-bottom:1px solid #111"></div>
<div class="ab" style="left:18px;top:576px;width:1px;height:32px;background:#111"></div>
<div class="ab" style="left:19px;top:577px;width:46px;height:32px;background:#fff;border-bottom:1px solid #a8a8a8"></div>
<div class="ab" style="left:65px;top:576px;width:1px;height:32px;background:#a8a8a8"></div>
<div class="ab" style="left:23px;top:584px"><svg width="19" height="19" viewBox="0 0 19 19" style="overflow:visible"><rect x="0.75" y="0.75" width="15.5" height="15.5" fill="#fff" stroke="#3d8f45" stroke-width="1.5"/><path d="M0.8 10 L4.2 15 L16.5 2.2" fill="none" stroke="#e6101a" stroke-width="3" stroke-linecap="round" stroke-linejoin="round"/></svg></div>
<div class="ab" style="left:66px;top:577px;width:198px;height:32px;background:linear-gradient(#f6f6f6,#ececec 30%,#ececec);border-bottom:2px solid #6e6e6e;border-right:2px solid #707070"></div>
<div class="t bb" style="left:69px;top:583px">红球<i>1</i><i>3</i><i>4</i><i>5</i><i>6</i>码的尾</div>
<div class="ab" style="left:264px;top:577px;width:1351px;height:32px;background:#fff;border-bottom:1px solid #b0b0b0"></div>

<div class="ab" style="left:1388px;top:576px;width:1px;height:32px;background:#c0c0c0"></div>
<div class="ab" style="left:1449px;top:576px;width:1px;height:32px;background:#c0c0c0"></div>
<div class="ab" style="left:1522px;top:576px;width:1px;height:32px;background:#c0c0c0"></div>
<div class="ab" style="left:269px;top:582px;width:21px;height:20px;background:#f3f5f3"></div>
<div class="ab" style="left:274px;top:589px;width:12px;height:2px;background:#3d7d3d"></div><div class="ab" style="left:274px;top:594px;width:12px;height:2px;background:#3d7d3d"></div>
<div class="t bb" style="left:300px;top:583px">排除掉最近<i>&nbsp;</i><i>7</i><i>&nbsp;</i>期开出过的值<i>.</i></div>
<div class="ab" style="left:1355px;top:584px"><svg width="19" height="19" viewBox="0 0 19 19" style="overflow:visible"><rect x="0.75" y="0.75" width="15.5" height="15.5" fill="#fff" stroke="#3d8f45" stroke-width="1.5"/><path d="M0.8 10 L4.2 15 L16.5 2.2" fill="none" stroke="#e6101a" stroke-width="3" stroke-linecap="round" stroke-linejoin="round"/></svg></div>
<div class="t" style="left:1414px;top:584px;font-family:'Liberation Serif',serif;font-weight:bold;font-size:17px;color:#1a1a9a">I</div>
<div class="ab" style="left:1474px;top:581px"><svg width="22" height="22" viewBox="0 0 22 22"><path d="M1.5 10.5 h4 v10 h-4 z M5.5 11 L9.5 6.5 L10 1.8 C11.8 1.2 13.2 2.6 12.6 5.2 L11.8 8.6 H18.4 C20 8.6 20.6 10.2 19.8 11.2 C20.8 12 20.6 13.6 19.4 14 C20.2 14.8 19.8 16.4 18.6 16.6 C19.2 17.6 18.6 19.2 17.2 19.6 H8 L5.5 18.5" fill="#f4fff8" stroke="#48c48e" stroke-width="1.5" stroke-linejoin="round"/><path d="M12.5 11.6 h5.6 M12.5 14.6 h5.6 M12.5 17.2 h4.8" stroke="#58c898" stroke-width="1"/></svg></div>
<div class="t rt" style="left:1522px;top:585px;width:93px;text-align:center;font-size:12px;color:#c01820"><i>1</i><i>0</i><i>0</i><i>.</i><i>0</i><i>0</i><i>%</i></div>
<div class="ab" style="left:1615px;top:576px;width:101px;height:32px;background:#fff"></div>
<div class="ab" style="left:1617px;top:577px;width:99px;height:32px;background:linear-gradient(#f8f8f8,#ededed 25%,#eaeaea);border-right:2px solid #6a6a6a;border-bottom:2px solid #6a6a6a;border-left:1px solid #fff"></div>
<div class="ab" style="left:1716px;top:576px;width:2px;height:32px;background:#fff"></div>
<div class="ab" style="left:1718px;top:577px;width:52px;height:32px;background:linear-gradient(#f8f8f8,#ededed 25%,#eaeaea);border-right:2px solid #6a6a6a;border-bottom:2px solid #6a6a6a;border-left:1px solid #fff"></div>
<div class="t bb" style="left:1617px;top:583px;width:97px;text-align:center">查看走势图</div>
<div class="t bb" style="left:1718px;top:583px;width:50px;text-align:center">删除</div>
<div class="ab" style="left:0;top:609px;width:18px;height:32px;background:#f0f0f0;border-bottom:1px solid #111"></div>
<div class="ab" style="left:18px;top:608px;width:1px;height:32px;background:#111"></div>
<div class="ab" style="left:19px;top:609px;width:46px;height:32px;background:#fff;border-bottom:1px solid #a8a8a8"></div>
<div class="ab" style="left:65px;top:608px;width:1px;height:32px;background:#a8a8a8"></div>
<div class="ab" style="left:23px;top:616px"><svg width="19" height="19" viewBox="0 0 19 19" style="overflow:visible"><rect x="0.75" y="0.75" width="15.5" height="15.5" fill="#fff" stroke="#3d8f45" stroke-width="1.5"/><path d="M0.8 10 L4.2 15 L16.5 2.2" fill="none" stroke="#e6101a" stroke-width="3" stroke-linecap="round" stroke-linejoin="round"/></svg></div>
<div class="ab" style="left:66px;top:609px;width:198px;height:32px;background:linear-gradient(#f6f6f6,#ececec 30%,#ececec);border-bottom:2px solid #6e6e6e;border-right:2px solid #707070"></div>
<div class="t bb" style="left:69px;top:615px">红球<i>2</i><i>3</i><i>4</i><i>5</i><i>6</i>码的尾</div>
<div class="ab" style="left:264px;top:609px;width:1351px;height:32px;background:#fff;border-bottom:1px solid #b0b0b0"></div>

<div class="ab" style="left:1388px;top:608px;width:1px;height:32px;background:#c0c0c0"></div>
<div class="ab" style="left:1449px;top:608px;width:1px;height:32px;background:#c0c0c0"></div>
<div class="ab" style="left:1522px;top:608px;width:1px;height:32px;background:#c0c0c0"></div>
<div class="ab" style="left:269px;top:614px;width:21px;height:20px;background:#f3f5f3"></div>
<div class="ab" style="left:274px;top:621px;width:12px;height:2px;background:#3d7d3d"></div><div class="ab" style="left:274px;top:626px;width:12px;height:2px;background:#3d7d3d"></div>
<div class="t bb" style="left:300px;top:615px">排除掉最近<i>&nbsp;</i><i>7</i><i>&nbsp;</i>期开出过的值<i>.</i></div>
<div class="ab" style="left:1355px;top:616px"><svg width="19" height="19" viewBox="0 0 19 19" style="overflow:visible"><rect x="0.75" y="0.75" width="15.5" height="15.5" fill="#fff" stroke="#3d8f45" stroke-width="1.5"/><path d="M0.8 10 L4.2 15 L16.5 2.2" fill="none" stroke="#e6101a" stroke-width="3" stroke-linecap="round" stroke-linejoin="round"/></svg></div>
<div class="t" style="left:1414px;top:616px;font-family:'Liberation Serif',serif;font-weight:bold;font-size:17px;color:#1a1a9a">I</div>
<div class="ab" style="left:1474px;top:613px"><svg width="22" height="22" viewBox="0 0 22 22"><path d="M1.5 10.5 h4 v10 h-4 z M5.5 11 L9.5 6.5 L10 1.8 C11.8 1.2 13.2 2.6 12.6 5.2 L11.8 8.6 H18.4 C20 8.6 20.6 10.2 19.8 11.2 C20.8 12 20.6 13.6 19.4 14 C20.2 14.8 19.8 16.4 18.6 16.6 C19.2 17.6 18.6 19.2 17.2 19.6 H8 L5.5 18.5" fill="#f4fff8" stroke="#48c48e" stroke-width="1.5" stroke-linejoin="round"/><path d="M12.5 11.6 h5.6 M12.5 14.6 h5.6 M12.5 17.2 h4.8" stroke="#58c898" stroke-width="1"/></svg></div>
<div class="t rt" style="left:1522px;top:617px;width:93px;text-align:center;font-size:12px;color:#c01820"><i>1</i><i>0</i><i>0</i><i>.</i><i>0</i><i>0</i><i>%</i></div>
<div class="ab" style="left:1615px;top:608px;width:101px;height:32px;background:#fff"></div>
<div class="ab" style="left:1617px;top:609px;width:99px;height:32px;background:linear-gradient(#f8f8f8,#ededed 25%,#eaeaea);border-right:2px solid #6a6a6a;border-bottom:2px solid #6a6a6a;border-left:1px solid #fff"></div>
<div class="ab" style="left:1716px;top:608px;width:2px;height:32px;background:#fff"></div>
<div class="ab" style="left:1718px;top:609px;width:52px;height:32px;background:linear-gradient(#f8f8f8,#ededed 25%,#eaeaea);border-right:2px solid #6a6a6a;border-bottom:2px solid #6a6a6a;border-left:1px solid #fff"></div>
<div class="t bb" style="left:1617px;top:615px;width:97px;text-align:center">查看走势图</div>
<div class="t bb" style="left:1718px;top:615px;width:50px;text-align:center">删除</div>
<div class="ab" style="left:0;top:641px;width:18px;height:32px;background:#f0f0f0;border-bottom:1px solid #111"></div>
<div class="ab" style="left:18px;top:640px;width:1px;height:32px;background:#111"></div>
<div class="ab" style="left:19px;top:641px;width:46px;height:32px;background:#fff;border-bottom:1px solid #a8a8a8"></div>
<div class="ab" style="left:65px;top:640px;width:1px;height:32px;background:#a8a8a8"></div>
<div class="ab" style="left:23px;top:648px"><svg width="19" height="19" viewBox="0 0 19 19" style="overflow:visible"><rect x="0.75" y="0.75" width="15.5" height="15.5" fill="#fff" stroke="#3d8f45" stroke-width="1.5"/><path d="M0.8 10 L4.2 15 L16.5 2.2" fill="none" stroke="#e6101a" stroke-width="3" stroke-linecap="round" stroke-linejoin="round"/></svg></div>
<div class="ab" style="left:66px;top:641px;width:198px;height:32px;background:linear-gradient(#f6f6f6,#ececec 30%,#ececec);border-bottom:2px solid #6e6e6e;border-right:2px solid #707070"></div>
<div class="t bb" style="left:69px;top:647px">红球<i>1</i><i>2</i><i>3</i><i>4</i>码的尾</div>
<div class="ab" style="left:264px;top:641px;width:1351px;height:32px;background:#fff;border-bottom:1px solid #b0b0b0"></div>

<div class="ab" style="left:1388px;top:640px;width:1px;height:32px;background:#c0c0c0"></div>
<div class="ab" style="left:1449px;top:640px;width:1px;height:32px;background:#c0c0c0"></div>
<div class="ab" style="left:1522px;top:640px;width:1px;height:32px;background:#c0c0c0"></div>
<div class="ab" style="left:269px;top:646px;width:21px;height:20px;background:#f3f5f3"></div>
<div class="ab" style="left:274px;top:653px;width:12px;height:2px;background:#3d7d3d"></div><div class="ab" style="left:274px;top:658px;width:12px;height:2px;background:#3d7d3d"></div>
<div class="t bb" style="left:300px;top:647px">排除掉最近<i>&nbsp;</i><i>3</i><i>&nbsp;</i>期开出过的值<i>.</i></div>
<div class="ab" style="left:1355px;top:648px"><svg width="19" height="19" viewBox="0 0 19 19" style="overflow:visible"><rect x="0.75" y="0.75" width="15.5" height="15.5" fill="#fff" stroke="#3d8f45" stroke-width="1.5"/><path d="M0.8 10 L4.2 15 L16.5 2.2" fill="none" stroke="#e6101a" stroke-width="3" stroke-linecap="round" stroke-linejoin="round"/></svg></div>
<div class="t" style="left:1414px;top:648px;font-family:'Liberation Serif',serif;font-weight:bold;font-size:17px;color:#1a1a9a">I</div>
<div class="ab" style="left:1474px;top:645px"><svg width="22" height="22" viewBox="0 0 22 22"><path d="M1.5 10.5 h4 v10 h-4 z M5.5 11 L9.5 6.5 L10 1.8 C11.8 1.2 13.2 2.6 12.6 5.2 L11.8 8.6 H18.4 C20 8.6 20.6 10.2 19.8 11.2 C20.8 12 20.6 13.6 19.4 14 C20.2 14.8 19.8 16.4 18.6 16.6 C19.2 17.6 18.6 19.2 17.2 19.6 H8 L5.5 18.5" fill="#f4fff8" stroke="#48c48e" stroke-width="1.5" stroke-linejoin="round"/><path d="M12.5 11.6 h5.6 M12.5 14.6 h5.6 M12.5 17.2 h4.8" stroke="#58c898" stroke-width="1"/></svg></div>
<div class="t rt" style="left:1522px;top:649px;width:93px;text-align:center;font-size:12px;color:#c01820"><i>1</i><i>0</i><i>0</i><i>.</i><i>0</i><i>0</i><i>%</i></div>
<div class="ab" style="left:1615px;top:640px;width:101px;height:32px;background:#fff"></div>
<div class="ab" style="left:1617px;top:641px;width:99px;height:32px;background:linear-gradient(#f8f8f8,#ededed 25%,#eaeaea);border-right:2px solid #6a6a6a;border-bottom:2px solid #6a6a6a;border-left:1px solid #fff"></div>
<div class="ab" style="left:1716px;top:640px;width:2px;height:32px;background:#fff"></div>
<div class="ab" style="left:1718px;top:641px;width:52px;height:32px;background:linear-gradient(#f8f8f8,#ededed 25%,#eaeaea);border-right:2px solid #6a6a6a;border-bottom:2px solid #6a6a6a;border-left:1px solid #fff"></div>
<div class="t bb" style="left:1617px;top:647px;width:97px;text-align:center">查看走势图</div>
<div class="t bb" style="left:1718px;top:647px;width:50px;text-align:center">删除</div>
<div class="ab" style="left:0;top:673px;width:18px;height:32px;background:#f0f0f0;border-bottom:1px solid #111"></div>
<div class="ab" style="left:18px;top:672px;width:1px;height:32px;background:#111"></div>
<div class="ab" style="left:19px;top:673px;width:46px;height:32px;background:#fff;border-bottom:1px solid #a8a8a8"></div>
<div class="ab" style="left:65px;top:672px;width:1px;height:32px;background:#a8a8a8"></div>
<div class="ab" style="left:23px;top:680px"><svg width="19" height="19" viewBox="0 0 19 19" style="overflow:visible"><rect x="0.75" y="0.75" width="15.5" height="15.5" fill="#fff" stroke="#3d8f45" stroke-width="1.5"/><path d="M0.8 10 L4.2 15 L16.5 2.2" fill="none" stroke="#e6101a" stroke-width="3" stroke-linecap="round" stroke-linejoin="round"/></svg></div>
<div class="ab" style="left:66px;top:673px;width:198px;height:32px;background:linear-gradient(#f6f6f6,#ececec 30%,#ececec);border-bottom:2px solid #6e6e6e;border-right:2px solid #707070"></div>
<div class="t bb" style="left:69px;top:679px">红球<i>2</i><i>3</i><i>4</i><i>5</i>码的尾</div>
<div class="ab" style="left:264px;top:673px;width:1351px;height:32px;background:#fff;border-bottom:1px solid #b0b0b0"></div>

<div class="ab" style="left:1388px;top:672px;width:1px;height:32px;background:#c0c0c0"></div>
<div class="ab" style="left:1449px;top:672px;width:1px;height:32px;background:#c0c0c0"></div>
<div class="ab" style="left:1522px;top:672px;width:1px;height:32px;background:#c0c0c0"></div>
<div class="ab" style="left:269px;top:678px;width:21px;height:20px;background:#f3f5f3"></div>
<div class="ab" style="left:274px;top:685px;width:12px;height:2px;background:#3d7d3d"></div><div class="ab" style="left:274px;top:690px;width:12px;height:2px;background:#3d7d3d"></div>
<div class="t bb" style="left:300px;top:679px">排除掉最近<i>&nbsp;</i><i>3</i><i>&nbsp;</i>期开出过的值<i>.</i></div>
<div class="ab" style="left:1355px;top:680px"><svg width="19" height="19" viewBox="0 0 19 19" style="overflow:visible"><rect x="0.75" y="0.75" width="15.5" height="15.5" fill="#fff" stroke="#3d8f45" stroke-width="1.5"/><path d="M0.8 10 L4.2 15 L16.5 2.2" fill="none" stroke="#e6101a" stroke-width="3" stroke-linecap="round" stroke-linejoin="round"/></svg></div>
<div class="t" style="left:1414px;top:680px;font-family:'Liberation Serif',serif;font-weight:bold;font-size:17px;color:#1a1a9a">I</div>
<div class="ab" style="left:1474px;top:677px"><svg width="22" height="22" viewBox="0 0 22 22"><path d="M1.5 10.5 h4 v10 h-4 z M5.5 11 L9.5 6.5 L10 1.8 C11.8 1.2 13.2 2.6 12.6 5.2 L11.8 8.6 H18.4 C20 8.6 20.6 10.2 19.8 11.2 C20.8 12 20.6 13.6 19.4 14 C20.2 14.8 19.8 16.4 18.6 16.6 C19.2 17.6 18.6 19.2 17.2 19.6 H8 L5.5 18.5" fill="#f4fff8" stroke="#48c48e" stroke-width="1.5" stroke-linejoin="round"/><path d="M12.5 11.6 h5.6 M12.5 14.6 h5.6 M12.5 17.2 h4.8" stroke="#58c898" stroke-width="1"/></svg></div>
<div class="t rt" style="left:1522px;top:681px;width:93px;text-align:center;font-size:12px;color:#c01820"><i>1</i><i>0</i><i>0</i><i>.</i><i>0</i><i>0</i><i>%</i></div>
<div class="ab" style="left:1615px;top:672px;width:101px;height:32px;background:#fff"></div>
<div class="ab" style="left:1617px;top:673px;width:99px;height:32px;background:linear-gradient(#f8f8f8,#ededed 25%,#eaeaea);border-right:2px solid #6a6a6a;border-bottom:2px solid #6a6a6a;border-left:1px solid #fff"></div>
<div class="ab" style="left:1716px;top:672px;width:2px;height:32px;background:#fff"></div>
<div class="ab" style="left:1718px;top:673px;width:52px;height:32px;background:linear-gradient(#f8f8f8,#ededed 25%,#eaeaea);border-right:2px solid #6a6a6a;border-bottom:2px solid #6a6a6a;border-left:1px solid #fff"></div>
<div class="t bb" style="left:1617px;top:679px;width:97px;text-align:center">查看走势图</div>
<div class="t bb" style="left:1718px;top:679px;width:50px;text-align:center">删除</div>
<div class="ab" style="left:0;top:705px;width:18px;height:32px;background:#f0f0f0;border-bottom:1px solid #111"></div>
<div class="ab" style="left:18px;top:704px;width:1px;height:32px;background:#111"></div>
<div class="ab" style="left:19px;top:705px;width:46px;height:32px;background:#fff;border-bottom:1px solid #a8a8a8"></div>
<div class="ab" style="left:65px;top:704px;width:1px;height:32px;background:#a8a8a8"></div>
<div class="ab" style="left:23px;top:712px"><svg width="19" height="19" viewBox="0 0 19 19" style="overflow:visible"><rect x="0.75" y="0.75" width="15.5" height="15.5" fill="#fff" stroke="#3d8f45" stroke-width="1.5"/><path d="M0.8 10 L4.2 15 L16.5 2.2" fill="none" stroke="#e6101a" stroke-width="3" stroke-linecap="round" stroke-linejoin="round"/></svg></div>
<div class="ab" style="left:66px;top:705px;width:198px;height:32px;background:linear-gradient(#f6f6f6,#ececec 30%,#ececec);border-bottom:2px solid #6e6e6e;border-right:2px solid #707070"></div>
<div class="t bb" style="left:69px;top:711px">红球<i>3</i><i>4</i><i>5</i><i>6</i>码的尾</div>
<div class="ab" style="left:264px;top:705px;width:1351px;height:32px;background:#fff;border-bottom:1px solid #b0b0b0"></div>

<div class="ab" style="left:1388px;top:704px;width:1px;height:32px;background:#c0c0c0"></div>
<div class="ab" style="left:1449px;top:704px;width:1px;height:32px;background:#c0c0c0"></div>
<div class="ab" style="left:1522px;top:704px;width:1px;height:32px;background:#c0c0c0"></div>
<div class="ab" style="left:269px;top:710px;width:21px;height:20px;background:#f3f5f3"></div>
<div class="ab" style="left:274px;top:717px;width:12px;height:2px;background:#3d7d3d"></div><div class="ab" style="left:274px;top:722px;width:12px;height:2px;background:#3d7d3d"></div>
<div class="t bb" style="left:300px;top:711px">排除掉最近<i>&nbsp;</i><i>3</i><i>&nbsp;</i>期开出过的值<i>.</i></div>
<div class="ab" style="left:1355px;top:712px"><svg width="19" height="19" viewBox="0 0 19 19" style="overflow:visible"><rect x="0.75" y="0.75" width="15.5" height="15.5" fill="#fff" stroke="#3d8f45" stroke-width="1.5"/><path d="M0.8 10 L4.2 15 L16.5 2.2" fill="none" stroke="#e6101a" stroke-width="3" stroke-linecap="round" stroke-linejoin="round"/></svg></div>
<div class="t" style="left:1414px;top:712px;font-family:'Liberation Serif',serif;font-weight:bold;font-size:17px;color:#1a1a9a">I</div>
<div class="ab" style="left:1474px;top:709px"><svg width="22" height="22" viewBox="0 0 22 22"><path d="M1.5 10.5 h4 v10 h-4 z M5.5 11 L9.5 6.5 L10 1.8 C11.8 1.2 13.2 2.6 12.6 5.2 L11.8 8.6 H18.4 C20 8.6 20.6 10.2 19.8 11.2 C20.8 12 20.6 13.6 19.4 14 C20.2 14.8 19.8 16.4 18.6 16.6 C19.2 17.6 18.6 19.2 17.2 19.6 H8 L5.5 18.5" fill="#f4fff8" stroke="#48c48e" stroke-width="1.5" stroke-linejoin="round"/><path d="M12.5 11.6 h5.6 M12.5 14.6 h5.6 M12.5 17.2 h4.8" stroke="#58c898" stroke-width="1"/></svg></div>
<div class="t rt" style="left:1522px;top:713px;width:93px;text-align:center;font-size:12px;color:#c01820"><i>1</i><i>0</i><i>0</i><i>.</i><i>0</i><i>0</i><i>%</i></div>
<div class="ab" style="left:1615px;top:704px;width:101px;height:32px;background:#fff"></div>
<div class="ab" style="left:1617px;top:705px;width:99px;height:32px;background:linear-gradient(#f8f8f8,#ededed 25%,#eaeaea);border-right:2px solid #6a6a6a;border-bottom:2px solid #6a6a6a;border-left:1px solid #fff"></div>
<div class="ab" style="left:1716px;top:704px;width:2px;height:32px;background:#fff"></div>
<div class="ab" style="left:1718px;top:705px;width:52px;height:32px;background:linear-gradient(#f8f8f8,#ededed 25%,#eaeaea);border-right:2px solid #6a6a6a;border-bottom:2px solid #6a6a6a;border-left:1px solid #fff"></div>
<div class="t bb" style="left:1617px;top:711px;width:97px;text-align:center">查看走势图</div>
<div class="t bb" style="left:1718px;top:711px;width:50px;text-align:center">删除</div>
<div class="ab" style="left:0;top:737px;width:18px;height:32px;background:#f0f0f0;border-bottom:1px solid #111"></div>
<div class="ab" style="left:18px;top:736px;width:1px;height:32px;background:#111"></div>
<div class="ab" style="left:19px;top:737px;width:46px;height:32px;background:#fff;border-bottom:1px solid #a8a8a8"></div>
<div class="ab" style="left:65px;top:736px;width:1px;height:32px;background:#a8a8a8"></div>
<div class="ab" style="left:23px;top:744px"><svg width="19" height="19" viewBox="0 0 19 19" style="overflow:visible"><rect x="0.75" y="0.75" width="15.5" height="15.5" fill="#fff" stroke="#3d8f45" stroke-width="1.5"/><path d="M0.8 10 L4.2 15 L16.5 2.2" fill="none" stroke="#e6101a" stroke-width="3" stroke-linecap="round" stroke-linejoin="round"/></svg></div>
<div class="ab" style="left:66px;top:737px;width:198px;height:32px;background:linear-gradient(#f6f6f6,#ececec 30%,#ececec);border-bottom:2px solid #6e6e6e;border-right:2px solid #707070"></div>
<div class="t bb" style="left:69px;top:743px">六位五码和尾</div>
<div class="ab" style="left:264px;top:737px;width:1351px;height:32px;background:#fff;border-bottom:1px solid #b0b0b0"></div>

<div class="ab" style="left:1388px;top:736px;width:1px;height:32px;background:#c0c0c0"></div>
<div class="ab" style="left:1449px;top:736px;width:1px;height:32px;background:#c0c0c0"></div>
<div class="ab" style="left:1522px;top:736px;width:1px;height:32px;background:#c0c0c0"></div>
<div class="ab" style="left:269px;top:742px;width:21px;height:20px;background:#f3f5f3"></div>
<div class="ab" style="left:274px;top:749px;width:12px;height:2px;background:#3d7d3d"></div><div class="ab" style="left:274px;top:754px;width:12px;height:2px;background:#3d7d3d"></div>
<div class="t bb" style="left:300px;top:743px">排除掉最近<i>&nbsp;</i><i>1</i><i>6</i><i>&nbsp;</i>期开出过的值<i>.</i></div>
<div class="ab" style="left:1355px;top:744px"><svg width="19" height="19" viewBox="0 0 19 19" style="overflow:visible"><rect x="0.75" y="0.75" width="15.5" height="15.5" fill="#fff" stroke="#3d8f45" stroke-width="1.5"/><path d="M0.8 10 L4.2 15 L16.5 2.2" fill="none" stroke="#e6101a" stroke-width="3" stroke-linecap="round" stroke-linejoin="round"/></svg></div>
<div class="t" style="left:1414px;top:744px;font-family:'Liberation Serif',serif;font-weight:bold;font-size:17px;color:#1a1a9a">I</div>
<div class="ab" style="left:1474px;top:741px"><svg width="22" height="22" viewBox="0 0 22 22"><path d="M1.5 10.5 h4 v10 h-4 z M5.5 11 L9.5 6.5 L10 1.8 C11.8 1.2 13.2 2.6 12.6 5.2 L11.8 8.6 H18.4 C20 8.6 20.6 10.2 19.8 11.2 C20.8 12 20.6 13.6 19.4 14 C20.2 14.8 19.8 16.4 18.6 16.6 C19.2 17.6 18.6 19.2 17.2 19.6 H8 L5.5 18.5" fill="#f4fff8" stroke="#48c48e" stroke-width="1.5" stroke-linejoin="round"/><path d="M12.5 11.6 h5.6 M12.5 14.6 h5.6 M12.5 17.2 h4.8" stroke="#58c898" stroke-width="1"/></svg></div>
<div class="t rt" style="left:1522px;top:745px;width:93px;text-align:center;font-size:12px;color:#c01820"><i>9</i><i>0</i><i>.</i><i>0</i><i>0</i><i>%</i></div>
<div class="ab" style="left:1615px;top:736px;width:101px;height:32px;background:#fff"></div>
<div class="ab" style="left:1617px;top:737px;width:99px;height:32px;background:linear-gradient(#f8f8f8,#ededed 25%,#eaeaea);border-right:2px solid #6a6a6a;border-bottom:2px solid #6a6a6a;border-left:1px solid #fff"></div>
<div class="ab" style="left:1716px;top:736px;width:2px;height:32px;background:#fff"></div>
<div class="ab" style="left:1718px;top:737px;width:52px;height:32px;background:linear-gradient(#f8f8f8,#ededed 25%,#eaeaea);border-right:2px solid #6a6a6a;border-bottom:2px solid #6a6a6a;border-left:1px solid #fff"></div>
<div class="t bb" style="left:1617px;top:743px;width:97px;text-align:center">查看走势图</div>
<div class="t bb" style="left:1718px;top:743px;width:50px;text-align:center">删除</div>
<div class="ab" style="left:0;top:769px;width:18px;height:32px;background:#f0f0f0;border-bottom:1px solid #111"></div>
<div class="ab" style="left:18px;top:768px;width:1px;height:32px;background:#111"></div>
<div class="ab" style="left:19px;top:769px;width:46px;height:32px;background:#b9f9f9;border-bottom:1px solid #a8a8a8"></div>
<div class="ab" style="left:65px;top:768px;width:1px;height:32px;background:#a8a8a8"></div>
<div class="ab" style="left:23px;top:776px"><svg width="19" height="19" viewBox="0 0 19 19" style="overflow:visible"><rect x="0.75" y="0.75" width="15.5" height="15.5" fill="#fff" stroke="#3d8f45" stroke-width="1.5"/><path d="M0.8 10 L4.2 15 L16.5 2.2" fill="none" stroke="#e6101a" stroke-width="3" stroke-linecap="round" stroke-linejoin="round"/></svg></div>
<svg class="ab" style="left:7px;top:779px" width="7" height="12" viewBox="0 0 7 12"><path d="M0 0 L6.5 6 L0 12 Z" fill="#000"/></svg>
<div class="ab" style="left:66px;top:769px;width:198px;height:32px;background:linear-gradient(#f6f6f6,#ececec 30%,#ececec);border-bottom:2px solid #6e6e6e;border-right:2px solid #707070"></div>
<div class="t bb" style="left:69px;top:775px">排除特定组合<i>6</i></div>
<div class="ab" style="left:264px;top:769px;width:1351px;height:32px;background:#b9f9f9;border-bottom:1px solid #b0b0b0"></div>

<div class="ab" style="left:1388px;top:768px;width:1px;height:32px;background:#c0c0c0"></div>
<div class="ab" style="left:1449px;top:768px;width:1px;height:32px;background:#c0c0c0"></div>
<div class="ab" style="left:1522px;top:768px;width:1px;height:32px;background:#c0c0c0"></div>
<div class="ab" style="left:269px;top:774px;width:21px;height:20px;background:#f3f5f3"></div>
<div class="ab" style="left:274px;top:781px;width:12px;height:2px;background:#3d7d3d"></div><div class="ab" style="left:274px;top:786px;width:12px;height:2px;background:#3d7d3d"></div>
<div class="t bb" style="left:300px;top:769px">排除掉最近<i>&nbsp;</i><i>3</i><i>&nbsp;</i>期内出过的<i>[</i>奇偶<i>]</i>组合<i>.</i></div>
<div class="ab" style="left:1322px;top:768px;width:17px;height:18px;background:#f4f4f4;border-right:2px solid #5a6a6a;border-bottom:2px solid #5a6a6a"></div>
<svg class="ab" style="left:1326px;top:774px" width="8" height="5" viewBox="0 0 8 5"><path d="M0 0 h8 l-4 5 z" fill="#000"/></svg>
<div class="ab" style="left:1355px;top:776px"><svg width="19" height="19" viewBox="0 0 19 19" style="overflow:visible"><rect x="0.75" y="0.75" width="15.5" height="15.5" fill="#fff" stroke="#3d8f45" stroke-width="1.5"/><path d="M0.8 10 L4.2 15 L16.5 2.2" fill="none" stroke="#e6101a" stroke-width="3" stroke-linecap="round" stroke-linejoin="round"/></svg></div>
<div class="t" style="left:1414px;top:776px;font-family:'Liberation Serif',serif;font-weight:bold;font-size:17px;color:#1a1a9a">I</div>
<div class="ab" style="left:1474px;top:773px"><svg width="22" height="22" viewBox="0 0 22 22"><path d="M1.5 10.5 h4 v10 h-4 z M5.5 11 L9.5 6.5 L10 1.8 C11.8 1.2 13.2 2.6 12.6 5.2 L11.8 8.6 H18.4 C20 8.6 20.6 10.2 19.8 11.2 C20.8 12 20.6 13.6 19.4 14 C20.2 14.8 19.8 16.4 18.6 16.6 C19.2 17.6 18.6 19.2 17.2 19.6 H8 L5.5 18.5" fill="#f4fff8" stroke="#48c48e" stroke-width="1.5" stroke-linejoin="round"/><path d="M12.5 11.6 h5.6 M12.5 14.6 h5.6 M12.5 17.2 h4.8" stroke="#58c898" stroke-width="1"/></svg></div>
<div class="t rt" style="left:1522px;top:777px;width:93px;text-align:center;font-size:12px;color:#c01820"><i>1</i><i>0</i><i>0</i><i>.</i><i>0</i><i>0</i><i>%</i></div>
<div class="ab" style="left:1615px;top:768px;width:101px;height:32px;background:#fff"></div>
<div class="ab" style="left:1617px;top:769px;width:99px;height:32px;background:linear-gradient(#f8f8f8,#ededed 25%,#eaeaea);border-right:2px solid #6a6a6a;border-bottom:2px solid #6a6a6a;border-left:1px solid #fff"></div>
<div class="ab" style="left:1716px;top:768px;width:2px;height:32px;background:#fff"></div>
<div class="ab" style="left:1718px;top:769px;width:52px;height:32px;background:linear-gradient(#f8f8f8,#ededed 25%,#eaeaea);border-right:2px solid #6a6a6a;border-bottom:2px solid #6a6a6a;border-left:1px solid #fff"></div>
<div class="t bb" style="left:1617px;top:775px;width:97px;text-align:center">查看走势图</div>
<div class="t bb" style="left:1718px;top:775px;width:50px;text-align:center">删除</div>
<div class="ab" style="left:0;top:801px;width:18px;height:32px;background:#f0f0f0;border-bottom:1px solid #111"></div>
<div class="ab" style="left:18px;top:800px;width:1px;height:32px;background:#111"></div>
<div class="ab" style="left:19px;top:801px;width:46px;height:32px;background:#fff;border-bottom:1px solid #a8a8a8"></div>
<div class="ab" style="left:65px;top:800px;width:1px;height:32px;background:#a8a8a8"></div>
<div class="ab" style="left:23px;top:808px"><svg width="17" height="17" viewBox="0 0 17 17"><rect x="0.75" y="0.75" width="15.5" height="15.5" fill="#fff" stroke="#3d8f45" stroke-width="1.5"/></svg></div>
<div class="ab" style="left:66px;top:801px;width:198px;height:32px;background:linear-gradient(#f6f6f6,#ececec 30%,#ececec);border-bottom:2px solid #6e6e6e;border-right:2px solid #707070"></div>
<div class="t sm" style="left:69px;top:809px">尾跨度</div>
<div class="ab" style="left:264px;top:801px;width:1351px;height:32px;background:#fff;border-bottom:1px solid #b0b0b0"></div>

<div class="ab" style="left:1388px;top:800px;width:1px;height:32px;background:#c0c0c0"></div>
<div class="ab" style="left:1449px;top:800px;width:1px;height:32px;background:#c0c0c0"></div>
<div class="ab" style="left:1522px;top:800px;width:1px;height:32px;background:#c0c0c0"></div>
<div class="ab" style="left:269px;top:806px;width:21px;height:20px;background:#f3f5f3"></div>
<div class="ab" style="left:274px;top:813px;width:12px;height:2px;background:#3d7d3d"></div><div class="ab" style="left:274px;top:818px;width:12px;height:2px;background:#3d7d3d"></div>
<div class="t sm" style="left:298px;top:809px"><i>4</i><i>,</i><i>5</i><i>,</i><i>6</i><i>,</i><i>7</i><i>,</i><i>8</i><i>,</i><i>9</i></div>
<div class="ab" style="left:1355px;top:808px"><svg width="17" height="17" viewBox="0 0 17 17"><rect x="0.75" y="0.75" width="15.5" height="15.5" fill="#fff" stroke="#3d8f45" stroke-width="1.5"/></svg></div>
<div class="ab" style="left:1615px;top:800px;width:101px;height:32px;background:#fff"></div>
<div class="ab" style="left:1617px;top:801px;width:99px;height:32px;background:linear-gradient(#f8f8f8,#ededed 25%,#eaeaea);border-right:2px solid #6a6a6a;border-bottom:2px solid #6a6a6a;border-left:1px solid #fff"></div>
<div class="ab" style="left:1716px;top:800px;width:2px;height:32px;background:#fff"></div>
<div class="ab" style="left:1718px;top:801px;width:52px;height:32px;background:linear-gradient(#f8f8f8,#ededed 25%,#eaeaea);border-right:2px solid #6a6a6a;border-bottom:2px solid #6a6a6a;border-left:1px solid #fff"></div>
<div class="t sm" style="left:1617px;top:809px;width:97px;text-align:center">查看走势图</div>
<div class="t sm" style="left:1718px;top:809px;width:50px;text-align:center">删除</div>
<div class="ab" style="left:0;top:833px;width:18px;height:32px;background:#f0f0f0;border-bottom:1px solid #111"></div>
<div class="ab" style="left:18px;top:832px;width:1px;height:32px;background:#111"></div>
<div class="ab" style="left:19px;top:833px;width:46px;height:32px;background:#fff;border-bottom:1px solid #a8a8a8"></div>
<div class="ab" style="left:65px;top:832px;width:1px;height:32px;background:#a8a8a8"></div>
<div class="ab" style="left:23px;top:840px"><svg width="19" height="19" viewBox="0 0 19 19" style="overflow:visible"><rect x="0.75" y="0.75" width="15.5" height="15.5" fill="#fff" stroke="#3d8f45" stroke-width="1.5"/><path d="M0.8 10 L4.2 15 L16.5 2.2" fill="none" stroke="#e6101a" stroke-width="3" stroke-linecap="round" stroke-linejoin="round"/></svg></div>
<div class="ab" style="left:66px;top:833px;width:198px;height:32px;background:linear-gradient(#f6f6f6,#ececec 30%,#ececec);border-bottom:2px solid #6e6e6e;border-right:2px solid #707070"></div>
<div class="t bb" style="left:69px;top:839px">连号形式</div>
<div class="ab" style="left:264px;top:833px;width:1351px;height:32px;background:#fff;border-bottom:1px solid #b0b0b0"></div>

<div class="ab" style="left:1388px;top:832px;width:1px;height:32px;background:#c0c0c0"></div>
<div class="ab" style="left:1449px;top:832px;width:1px;height:32px;background:#c0c0c0"></div>
<div class="ab" style="left:1522px;top:832px;width:1px;height:32px;background:#c0c0c0"></div>
<div class="ab" style="left:269px;top:838px;width:21px;height:20px;background:#f3f5f3"></div>
<div class="ab" style="left:274px;top:845px;width:12px;height:2px;background:#3d7d3d"></div><div class="ab" style="left:274px;top:850px;width:12px;height:2px;background:#3d7d3d"></div>
<div class="t bb" style="left:300px;top:839px"><i>0</i><i>,</i><i>2</i><i>,</i><i>2</i><i>+</i><i>2</i><i>,</i><i>3</i><i>,</i><i>3</i><i>+</i><i>2</i></div>
<div class="ab" style="left:1355px;top:840px"><svg width="17" height="17" viewBox="0 0 17 17"><rect x="0.75" y="0.75" width="15.5" height="15.5" fill="#fff" stroke="#3d8f45" stroke-width="1.5"/></svg></div>
<div class="ab" style="left:1474px;top:837px"><svg width="22" height="22" viewBox="0 0 22 22"><path d="M1.5 10.5 h4 v10 h-4 z M5.5 11 L9.5 6.5 L10 1.8 C11.8 1.2 13.2 2.6 12.6 5.2 L11.8 8.6 H18.4 C20 8.6 20.6 10.2 19.8 11.2 C20.8 12 20.6 13.6 19.4 14 C20.2 14.8 19.8 16.4 18.6 16.6 C19.2 17.6 18.6 19.2 17.2 19.6 H8 L5.5 18.5" fill="#f4fff8" stroke="#48c48e" stroke-width="1.5" stroke-linejoin="round"/><path d="M12.5 11.6 h5.6 M12.5 14.6 h5.6 M12.5 17.2 h4.8" stroke="#58c898" stroke-width="1"/></svg></div>
<div class="t rt" style="left:1522px;top:841px;width:93px;text-align:center;font-size:12px;color:#c01820"><i>1</i><i>0</i><i>0</i><i>.</i><i>0</i><i>0</i><i>%</i></div>
<div class="ab" style="left:1615px;top:832px;width:101px;height:32px;background:#fff"></div>
<div class="ab" style="left:1617px;top:833px;width:99px;height:32px;background:linear-gradient(#f8f8f8,#ededed 25%,#eaeaea);border-right:2px solid #6a6a6a;border-bottom:2px solid #6a6a6a;border-left:1px solid #fff"></div>
<div class="ab" style="left:1716px;top:832px;width:2px;height:32px;background:#fff"></div>
<div class="ab" style="left:1718px;top:833px;width:52px;height:32px;background:linear-gradient(#f8f8f8,#ededed 25%,#eaeaea);border-right:2px solid #6a6a6a;border-bottom:2px solid #6a6a6a;border-left:1px solid #fff"></div>
<div class="t bb" style="left:1617px;top:839px;width:97px;text-align:center">查看走势图</div>
<div class="t bb" style="left:1718px;top:839px;width:50px;text-align:center">删除</div>
<div class="ab" style="left:0;top:865px;width:18px;height:32px;background:#f0f0f0;border-bottom:1px solid #111"></div>
<div class="ab" style="left:18px;top:864px;width:1px;height:32px;background:#111"></div>
<div class="ab" style="left:19px;top:865px;width:46px;height:32px;background:#fff;border-bottom:1px solid #a8a8a8"></div>
<div class="ab" style="left:65px;top:864px;width:1px;height:32px;background:#a8a8a8"></div>
<div class="ab" style="left:23px;top:872px"><svg width="17" height="17" viewBox="0 0 17 17"><rect x="0.75" y="0.75" width="15.5" height="15.5" fill="#fff" stroke="#3d8f45" stroke-width="1.5"/></svg></div>
<div class="ab" style="left:66px;top:865px;width:198px;height:32px;background:linear-gradient(#f6f6f6,#ececec 30%,#ececec);border-bottom:2px solid #6e6e6e;border-right:2px solid #707070"></div>
<div class="t sm" style="left:69px;top:873px">极号间距</div>
<div class="ab" style="left:264px;top:865px;width:1351px;height:32px;background:#fff;border-bottom:1px solid #b0b0b0"></div>

<div class="ab" style="left:1388px;top:864px;width:1px;height:32px;background:#c0c0c0"></div>
<div class="ab" style="left:1449px;top:864px;width:1px;height:32px;background:#c0c0c0"></div>
<div class="ab" style="left:1522px;top:864px;width:1px;height:32px;background:#c0c0c0"></div>
<div class="ab" style="left:269px;top:870px;width:21px;height:20px;background:#f3f5f3"></div>
<div class="ab" style="left:274px;top:877px;width:12px;height:2px;background:#3d7d3d"></div><div class="ab" style="left:274px;top:882px;width:12px;height:2px;background:#3d7d3d"></div>
<div class="t sm" style="left:298px;top:873px"><i>1</i><i>2</i><i>-</i><i>3</i><i>1</i></div>
<div class="ab" style="left:1355px;top:872px"><svg width="17" height="17" viewBox="0 0 17 17"><rect x="0.75" y="0.75" width="15.5" height="15.5" fill="#fff" stroke="#3d8f45" stroke-width="1.5"/></svg></div>
<div class="ab" style="left:1615px;top:864px;width:101px;height:32px;background:#fff"></div>
<div class="ab" style="left:1617px;top:865px;width:99px;height:32px;background:linear-gradient(#f8f8f8,#ededed 25%,#eaeaea);border-right:2px solid #6a6a6a;border-bottom:2px solid #6a6a6a;border-left:1px solid #fff"></div>
<div class="ab" style="left:1716px;top:864px;width:2px;height:32px;background:#fff"></div>
<div class="ab" style="left:1718px;top:865px;width:52px;height:32px;background:linear-gradient(#f8f8f8,#ededed 25%,#eaeaea);border-right:2px solid #6a6a6a;border-bottom:2px solid #6a6a6a;border-left:1px solid #fff"></div>
<div class="t sm" style="left:1617px;top:873px;width:97px;text-align:center">查看走势图</div>
<div class="t sm" style="left:1718px;top:873px;width:50px;text-align:center">删除</div>
<div class="ab" style="left:0;top:897px;width:18px;height:32px;background:#f0f0f0;border-bottom:1px solid #111"></div>
<div class="ab" style="left:18px;top:896px;width:1px;height:32px;background:#111"></div>
<div class="ab" style="left:19px;top:897px;width:46px;height:32px;background:#fff;border-bottom:1px solid #a8a8a8"></div>
<div class="ab" style="left:65px;top:896px;width:1px;height:32px;background:#a8a8a8"></div>
<div class="ab" style="left:23px;top:904px"><svg width="19" height="19" viewBox="0 0 19 19" style="overflow:visible"><rect x="0.75" y="0.75" width="15.5" height="15.5" fill="#fff" stroke="#3d8f45" stroke-width="1.5"/><path d="M0.8 10 L4.2 15 L16.5 2.2" fill="none" stroke="#e6101a" stroke-width="3" stroke-linecap="round" stroke-linejoin="round"/></svg></div>
<div class="ab" style="left:66px;top:897px;width:198px;height:32px;background:linear-gradient(#f6f6f6,#ececec 30%,#ececec);border-bottom:2px solid #6e6e6e;border-right:2px solid #707070"></div>
<div class="t bb" style="left:69px;top:903px">龙头号码</div>
<div class="ab" style="left:264px;top:897px;width:1351px;height:32px;background:#fff;border-bottom:1px solid #b0b0b0"></div>

<div class="ab" style="left:1388px;top:896px;width:1px;height:32px;background:#c0c0c0"></div>
<div class="ab" style="left:1449px;top:896px;width:1px;height:32px;background:#c0c0c0"></div>
<div class="ab" style="left:1522px;top:896px;width:1px;height:32px;background:#c0c0c0"></div>
<div class="ab" style="left:269px;top:902px;width:21px;height:20px;background:#f3f5f3"></div>
<div class="ab" style="left:274px;top:909px;width:12px;height:2px;background:#3d7d3d"></div><div class="ab" style="left:274px;top:914px;width:12px;height:2px;background:#3d7d3d"></div>
<div class="t bb" style="left:300px;top:903px"><i>1</i><i>-</i><i>1</i><i>7</i></div>
<div class="ab" style="left:1355px;top:904px"><svg width="17" height="17" viewBox="0 0 17 17"><rect x="0.75" y="0.75" width="15.5" height="15.5" fill="#fff" stroke="#3d8f45" stroke-width="1.5"/></svg></div>
<div class="ab" style="left:1474px;top:901px"><svg width="22" height="22" viewBox="0 0 22 22"><path d="M1.5 10.5 h4 v10 h-4 z M5.5 11 L9.5 6.5 L10 1.8 C11.8 1.2 13.2 2.6 12.6 5.2 L11.8 8.6 H18.4 C20 8.6 20.6 10.2 19.8 11.2 C20.8 12 20.6 13.6 19.4 14 C20.2 14.8 19.8 16.4 18.6 16.6 C19.2 17.6 18.6 19.2 17.2 19.6 H8 L5.5 18.5" fill="#f4fff8" stroke="#48c48e" stroke-width="1.5" stroke-linejoin="round"/><path d="M12.5 11.6 h5.6 M12.5 14.6 h5.6 M12.5 17.2 h4.8" stroke="#58c898" stroke-width="1"/></svg></div>
<div class="t rt" style="left:1522px;top:905px;width:93px;text-align:center;font-size:12px;color:#c01820"><i>1</i><i>0</i><i>0</i><i>.</i><i>0</i><i>0</i><i>%</i></div>
<div class="ab" style="left:1615px;top:896px;width:101px;height:32px;background:#fff"></div>
<div class="ab" style="left:1617px;top:897px;width:99px;height:32px;background:linear-gradient(#f8f8f8,#ededed 25%,#eaeaea);border-right:2px solid #6a6a6a;border-bottom:2px solid #6a6a6a;border-left:1px solid #fff"></div>
<div class="ab" style="left:1716px;top:896px;width:2px;height:32px;background:#fff"></div>
<div class="ab" style="left:1718px;top:897px;width:52px;height:32px;background:linear-gradient(#f8f8f8,#ededed 25%,#eaeaea);border-right:2px solid #6a6a6a;border-bottom:2px solid #6a6a6a;border-left:1px solid #fff"></div>
<div class="t bb" style="left:1617px;top:903px;width:97px;text-align:center">查看走势图</div>
<div class="t bb" style="left:1718px;top:903px;width:50px;text-align:center">删除</div>
</div>
<div class="ab" style="left:0;top:1052px;width:1920px;height:4px;background:#f4f4f4;border-bottom:1px solid #777"></div>
<div class="ab" style="left:1905px;top:114px;width:14px;height:938px;background:repeating-conic-gradient(#f2f2f2 0 25%,#e2e2e2 0 50%) 0 0/2px 2px"></div>
<div class="ab" style="left:1905px;top:114px;width:14px;height:20px;background:#f0f0f0"></div>
<svg class="ab" style="left:1908px;top:121px" width="8" height="5" viewBox="0 0 8 5"><path d="M0 5 h8 l-4 -5 z" fill="#222"/></svg>
<div class="ab" style="left:1905px;top:134px;width:14px;height:229px;background:#f0f0f0;border-bottom:1px solid #9a9a9a;border-left:1px solid #fafafa"></div>
<svg class="ab" style="left:1908px;top:1044px" width="8" height="5" viewBox="0 0 8 5"><path d="M0 0 h8 l-4 5 z" fill="#222"/></svg>
<div class="ab" style="left:1919px;top:23px;width:1px;height:1057px;background:#444"></div>
<div class="ab" style="left:0;top:1056px;width:1920px;height:24px;background:#f0f0f0;border-bottom:2px solid #444"></div>
<div class="ab" style="left:2px;top:1057px;width:342px;height:21px;border-left:1px solid #a0a0a0;border-top:1px solid #a0a0a0;border-right:1px solid #fff"></div>
<div class="ab" style="left:347px;top:1057px;width:868px;height:21px;border-left:1px solid #a0a0a0;border-top:1px solid #a0a0a0"></div>
<div class="ab" style="left:1218px;top:1057px;width:700px;height:21px;border-left:1px solid #a0a0a0;border-top:1px solid #a0a0a0"></div>
<div class="t st" style="left:5px;top:1062px;font-size:13px;font-weight:bold;color:#111"><i class=w>=</i><i class=w>=</i><i class=w>=</i><i class=w>&gt;</i><i class=w>&gt;</i><i class=w>&gt;</i>双色球销售截止还有<i>:</i><i class=s> </i><i>1</i><i class=s> </i>天<i class=s> </i><i>2</i><i class=s> </i>小时<i class=s> </i><i>1</i><i>0</i><i class=s> </i>分钟<i class=s> </i><i>3</i><i>6</i><i class=s> </i>秒</div>
<div class="t st" style="left:1223px;top:1062px;font-size:13px;font-weight:bold;color:#111">已选拖码（<i>1</i><i>1</i>个）<i>,</i>胆码（<i>0</i>个）共：<i>4</i><i class=s7> </i><i>6</i><i class=s7> </i><i>2</i><i class=s7> </i><i class=s7> </i>注</div>
<div class="ab" style="left:740px;top:374px;width:440px;height:334px;border:1px solid #1e2a36;border-radius:6px 6px 0 0;background:linear-gradient(#9fb9d6,#b7cde6 12%,#bcd2ea);box-shadow:0 0 0 1px rgba(255,255,255,.4) inset"></div>
<svg class="ab" style="left:749px;top:383px" width="17" height="17" viewBox="0 0 17 17"><rect x="1" y="1" width="15" height="15" fill="#fff4f4"/><path d="M1 1 V16.5 H16.5 V1" fill="none" stroke="#a8182a" stroke-width="1.8"/><path d="M3 7 L8 3 L15 7 L9 12 Z" fill="#e41e24"/><path d="M5 6.5 L9 4.5 L12 6.5 L9 9 Z" fill="#ff6060"/><path d="M3 14.5 h11" stroke="#222" stroke-width="2.4" stroke-dasharray="1.3 1.4"/></svg>
<div class="t" style="left:775px;top:385px;font-size:12px;color:#111">请选择所增加条件的类型</div>
<div class="ab" style="left:1073px;top:383px;width:31px;height:17px;border:1px solid #7d8c9d;border-radius:3px;background:linear-gradient(#d6e2ee,#b8cade)"></div>
<div class="ab" style="left:1106px;top:383px;width:31px;height:17px;border:1px solid #7d8c9d;border-radius:3px;background:linear-gradient(#d6e2ee,#b8cade)"></div>
<div class="ab" style="left:1084px;top:391px;width:10px;height:4px;background:#fff;border:1px solid #333"></div>
<div class="ab" style="left:1117px;top:387px;width:10px;height:8px;background:#fff;border:1.5px solid #333"></div>
<div class="ab" style="left:1139px;top:383px;width:31px;height:17px;border:1px solid #5a2020;border-radius:3px;background:linear-gradient(#e8a090,#d05a40 50%,#c84a30)"></div>
<svg class="ab" style="left:1148px;top:386px" width="13" height="11" viewBox="0 0 13 11"><path d="M2 1.5 L11 9.5 M11 1.5 L2 9.5" stroke="#5a2a20" stroke-width="4"/><path d="M2 1.5 L11 9.5 M11 1.5 L2 9.5" stroke="#fff" stroke-width="2.2"/></svg>
<div class="ab" style="left:748px;top:402px;width:424px;height:297px;background:#f0f0f0;border:1px solid #d8e0ea"></div>
<div class="ab" style="left:752px;top:408px;width:415px;height:232px;border:1px solid #a0a0a0;border-right-color:#fff;border-bottom-color:#9a9a9a;background:#f0f0f0"></div>
<div class="ab" style="left:754px;top:427px;width:410px;height:195px;background:#fff;border-left:2px solid #6a6a6a;border-top:2px solid #6a6a6a;border-bottom:1px solid #e0e0e0"></div>
<div class="ab" style="left:756px;top:429px;width:407px;height:31px;background:#3399ff"></div>
<div class="t dl" style="left:759px;top:429px;font-size:19px;color:#fff"><i>1</i><i>.</i>选定一组号码然后设置他们允许开出的个数</div>
<div class="t dl" style="left:759px;top:461px;font-size:19px;color:#222"><i>2</i><i>.</i>通过公式建立条件</div>
<div class="t dl" style="left:759px;top:493px;font-size:19px;color:#222"><i>3</i><i>.</i>排除指定形式的号码组合</div>
<div class="t dl" style="left:759px;top:525px;font-size:19px;color:#222"><i>4</i><i>.</i>建立头数个数相关的过滤条件</div>
<div class="t dl" style="left:759px;top:557px;font-size:19px;color:#222"><i>5</i><i>.</i>建立尾数个数相关的过滤条件</div>
<div class="t dl" style="left:759px;top:589px;font-size:19px;color:#222"><i>6</i><i>.</i>建立断组类型的过滤条件</div>
<div class="ab" style="left:942px;top:653px;width:94px;height:35px;background:linear-gradient(#f0f0f0,#e0e0e0);border:1px solid #8a8a8a;border-right:2px solid #707070;border-bottom:2px solid #707070;border-radius:3px"></div>
<div class="ab" style="left:955px;top:657px;width:26px;height:26px;border-radius:50%;background:#d8d8d8;border:1px solid #b0b0b0"></div>
<div class="ab" style="left:957px;top:659px;width:22px;height:22px;border-radius:50%;background:radial-gradient(circle at 50% 35%,#8ef08e,#2aa82a 75%)"></div>
<div class="t" style="left:988px;top:662px;font-size:16px;color:#111">确<span style="display:inline-block;width:7px"></span>定</div>
<div class="ab" style="left:1072px;top:653px;width:94px;height:35px;background:linear-gradient(#f0f0f0,#e0e0e0);border:1px solid #8a8a8a;border-right:2px solid #707070;border-bottom:2px solid #707070;border-radius:3px"></div>
<div class="ab" style="left:1085px;top:657px;width:26px;height:26px;border-radius:50%;background:#d8d8d8;border:1px solid #b0b0b0"></div>
<div class="ab" style="left:1087px;top:659px;width:22px;height:22px;border-radius:50%;background:radial-gradient(circle at 50% 35%,#ff9a9a,#d81a1a 75%)"></div>
<div class="t" style="left:1118px;top:662px;font-size:16px;color:#111">关<span style="display:inline-block;width:7px"></span>闭</div>
</body></html>
